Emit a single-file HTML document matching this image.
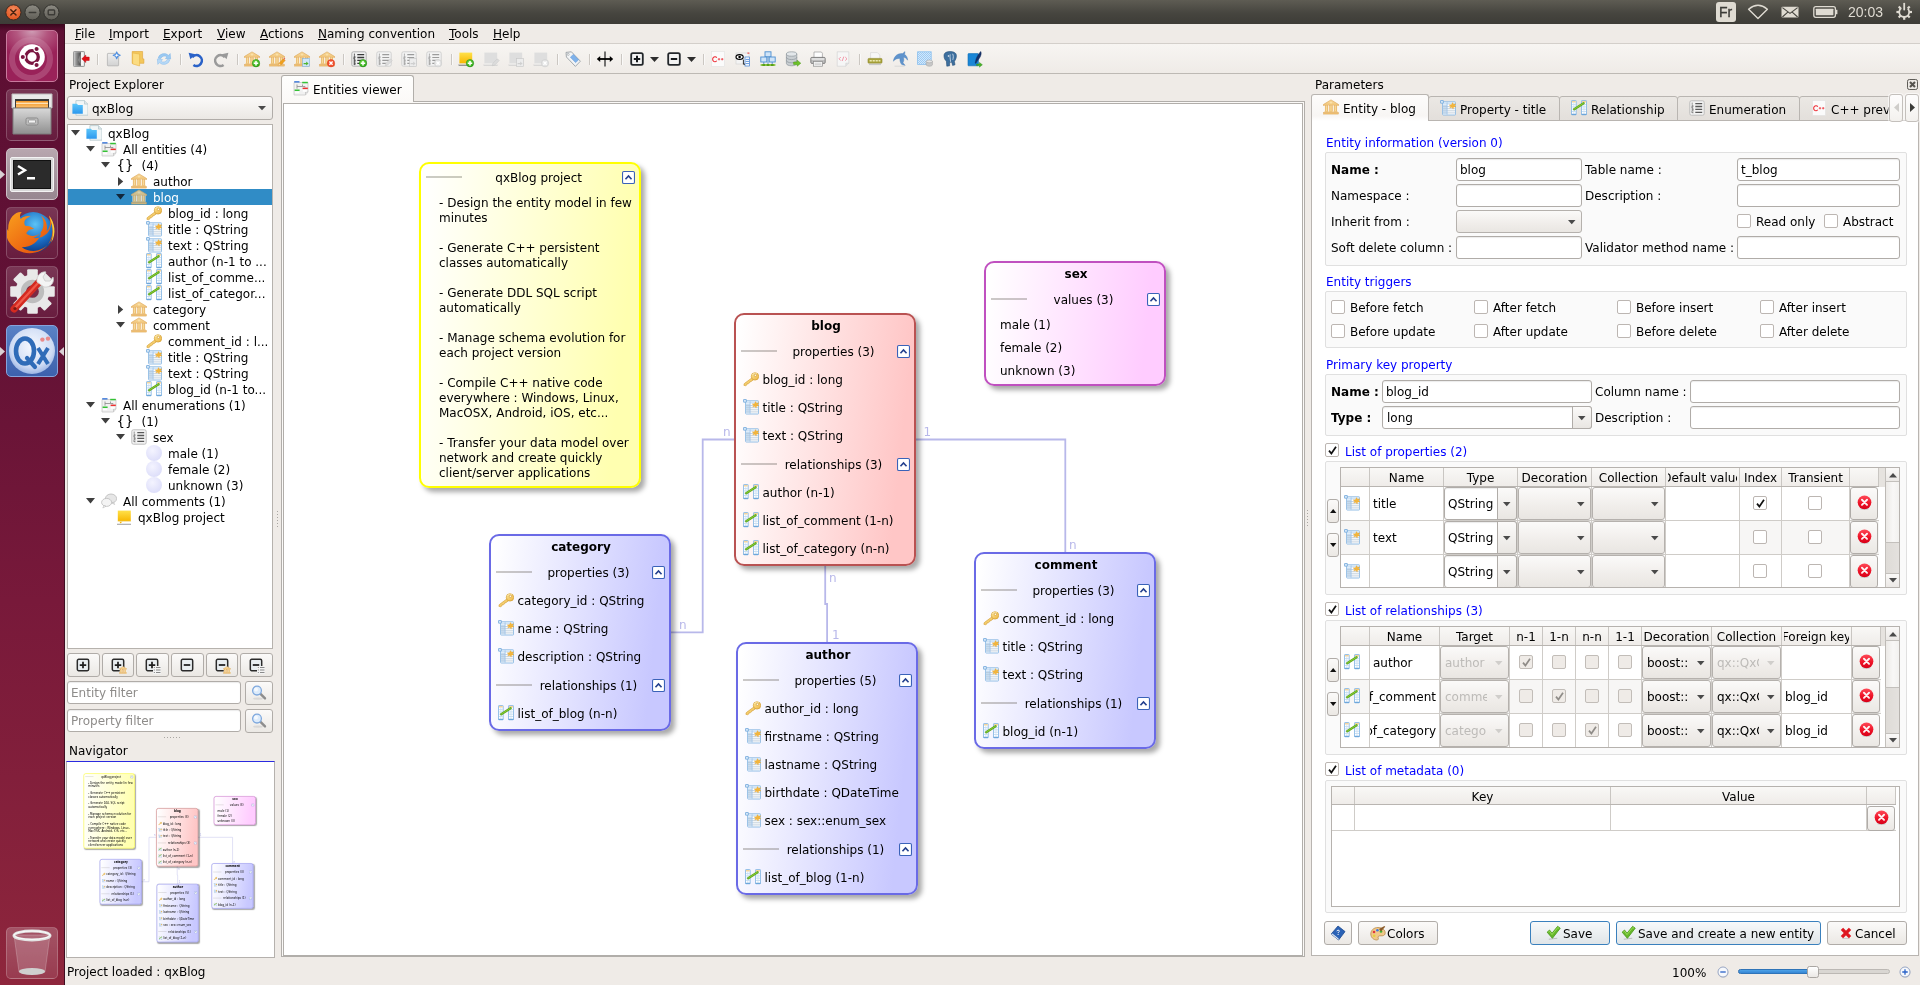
<!DOCTYPE html>
<html lang="en"><head><meta charset="utf-8"><title>QxEntityEditor</title>
<style>

*{box-sizing:border-box;margin:0;padding:0}
html,body{width:1920px;height:985px;overflow:hidden;background:#efebe7;font-family:"DejaVu Sans","Liberation Sans",sans-serif;font-size:12px;color:#000;line-height:14px}
#root{position:absolute;left:0;top:0;width:1920px;height:985px;overflow:hidden;will-change:transform}
.a{position:absolute}
.t{position:absolute;white-space:nowrap;line-height:14px;height:14px}
svg{position:absolute;overflow:visible}
#topbar{left:0;top:0;width:1920px;height:24px;background:linear-gradient(#5e5c53,#46453f 55%,#3d3c37)}
#launcher{left:0;top:24px;width:65px;height:961px;background:linear-gradient(#5d0f33 0%,#611135 30%,#78193a 60%,#8e263c 100%);border-right:1px solid #3f0d22}
.lt{position:absolute;left:6px;width:52px;height:52px;border-radius:5px;border:1px solid rgba(255,255,255,.20);background:linear-gradient(rgba(255,255,255,.16),rgba(255,255,255,.05));overflow:hidden}
#menubar{left:65px;top:24px;width:1855px;height:19px;background:#efebe7}
#toolbar{left:65px;top:43px;width:1855px;height:31px;background:linear-gradient(#f7f5f2,#efebe7);border-top:1px solid #d3cfca;border-bottom:1px solid #bdb9b4}
.sep{position:absolute;top:54px;width:2px;height:11px;background:linear-gradient(90deg,#cbc7c2 50%,#faf9f8 50%)}
.inp{position:absolute;background:#fff;border:1px solid #b0aca8;border-radius:3px;box-shadow:inset 0 1px 1px rgba(0,0,0,.08)}
.btn{position:absolute;border:1px solid #b0aca8;border-radius:3px;background:linear-gradient(#fbfaf9,#ebe8e4)}
.gb{position:absolute;border:1px solid #e0e0e0;border-radius:2px;background:#fafafa}
.cb{position:absolute;width:14px;height:14px;border:1px solid #bcb6b2;border-radius:2px;background:#fff}
.blue{color:#0000ff}
.hl{background:#308cc6}

</style></head>
<body><div id="root">

<svg width="0" height="0" style="position:absolute">
<defs>
<linearGradient id="gFold" x1="0" y1="0" x2="0" y2="1"><stop offset="0" stop-color="#5cc6fa"/><stop offset="1" stop-color="#2c98ee"/></linearGradient>
<linearGradient id="gBank" x1="0" y1="0" x2="0" y2="1"><stop offset="0" stop-color="#f9dca0"/><stop offset="1" stop-color="#f0c478"/></linearGradient>
<linearGradient id="gCol" x1="0" y1="0" x2="1" y2="0"><stop offset="0" stop-color="#ecbc6e"/><stop offset=".5" stop-color="#f9dc9a"/><stop offset="1" stop-color="#e9b666"/></linearGradient>
<linearGradient id="gKey" x1="0" y1="0" x2="1" y2="1"><stop offset="0" stop-color="#fbe595"/><stop offset="1" stop-color="#eeb545"/></linearGradient>
<linearGradient id="gNote" x1="0" y1="0" x2="0" y2="1"><stop offset="0" stop-color="#ffe14a"/><stop offset="1" stop-color="#f7b600"/></linearGradient>
<radialGradient id="gEval" cx=".4" cy=".35" r=".75"><stop offset="0" stop-color="#f4f4ff"/><stop offset="1" stop-color="#dadbf9"/></radialGradient>
<linearGradient id="gRed2" x1="0" y1="0" x2="0" y2="1"><stop offset="0" stop-color="#ff4a58"/><stop offset=".55" stop-color="#ee1428"/><stop offset="1" stop-color="#d80018"/></linearGradient>
<radialGradient id="gRed" cx=".4" cy=".35" r=".7"><stop offset="0" stop-color="#f5544c"/><stop offset="1" stop-color="#c4121a"/></radialGradient>
<radialGradient id="gGreen" cx=".4" cy=".35" r=".7"><stop offset="0" stop-color="#7be04a"/><stop offset="1" stop-color="#2aa516"/></radialGradient>

<symbol id="i-project" viewBox="0 0 16 16">
 <path d="M3.900 .6h8.600l3.500 3.500v11.100h-12.100z" fill="#f1f6f7" stroke="#b4c6cb" stroke-width=".8"/>
 <path d="M12.500 .6v3.500h3.500" fill="#dce7ea" stroke="#b4c6cb" stroke-width=".7"/>
 <path d="M.4 3.700h4.500l1.100 1.300h4.800v8.700h-10.400z" fill="url(#gFold)"/>
</symbol>

<symbol id="i-entities" viewBox="0 0 16 16">
 <path d="M1 2.5h14v9.5l-2.5 3h-11.5z" fill="#f1f1f1" stroke="#c9c9c9" stroke-width=".8"/>
 <path d="M12.5 15v-3h2.5" fill="#e1e1e1" stroke="#c2c2c2" stroke-width=".7"/>
 <rect x="1.2" y="1.2" width="5.3" height="1.3" fill="#2f6fd8"/>
 <rect x="9.2" y="1.8" width="5.6" height="1.5" fill="#35c135"/>
 <rect x="1.6" y="9.5" width="5" height="1.5" fill="#35c135"/>
 <rect x="9.6" y="7.6" width="5.2" height="1.5" fill="#ee3030"/>
 <path d="M4 4.5v4.2M4 6.5h5.5v-2M9.5 6.5h2.5v1" fill="none" stroke="#8c8c8c" stroke-width=".8"/>
 <rect x="2" y="11.6" width="4" height="1.6" fill="#fff" opacity=".9"/>
 <rect x="9.8" y="9.8" width="4" height="2" fill="#fff" opacity=".9"/>
</symbol>

<symbol id="i-entity" viewBox="0 0 16 16"><g transform="translate(0,-.8)">
 <path d="M8 1.700L15.700 6.400v.8H.3v-.8z" fill="url(#gBank)" stroke="#e0aa5c" stroke-width=".7" stroke-linejoin="round"/>
 <ellipse cx="8" cy="4.600" rx="1.300" ry=".8" fill="#fbe3b0"/>
 <rect x="1.500" y="7.200" width="13" height="6.300" fill="#fdf9f1"/>
 <g stroke="#e3ad5e" stroke-width=".5"><rect x="2.200" y="7.300" width="2.700" height="6.200" fill="url(#gCol)"/><rect x="6.650" y="7.300" width="2.700" height="6.200" fill="url(#gCol)"/><rect x="11.100" y="7.300" width="2.700" height="6.200" fill="url(#gCol)"/></g>
 <rect x="1.200" y="13.300" width="13.600" height="1" fill="#f0c375"/>
 <rect x=".5" y="14.200" width="15" height="1.700" fill="#efbf70" stroke="#dba457" stroke-width=".4"/>
</g></symbol>
<symbol id="i-key" viewBox="0 0 16 16">
 <path d="M9.600 6.400L1.300 12.600l-.4 1.700 1.800.4 1.500-1.200.1-1 1.200.1 1.300-1.100 .1-.9 1.100 0 3.200-2.400z" fill="url(#gKey)" stroke="#d6a23a" stroke-width=".7" stroke-linejoin="round"/>
 <circle cx="12" cy="5.400" r="3.700" fill="url(#gKey)" stroke="#d6a23a" stroke-width=".8"/>
 <path d="M9.200 4.200a3.200 3.200 0 0 1 4.600-1.600" fill="none" stroke="#fdf0c0" stroke-width=".9" opacity=".8"/>
 <circle cx="12.400" cy="4.300" r="1.150" fill="#fffaf0" stroke="#cf9a34" stroke-width=".6"/>
</symbol>

<symbol id="i-prop" viewBox="0 0 16 16">
 <rect x="2.600" y="1.800" width="13" height="13.200" rx=".7" fill="#fff" stroke="#86b6e2" stroke-width=".9"/>
 <rect x="3.050" y="2.250" width="12.100" height="2.300" fill="#cfe3f6"/>
 <rect x="3.050" y="4.550" width="4" height="10" fill="#d9e9f8"/>
 <path d="M3 6.600h12.200M3 8.700h12.200M3 10.800h12.200M3 12.900h12.200" stroke="#a7bccd" stroke-width=".7"/>
 <path d="M3 5.600h4M3 7.700h4M3 9.800h4M3 11.900h4M3 14h4" stroke="#bcd6ef" stroke-width=".8"/>
 <path d="M7.100 2.300v12.300" stroke="#9cc3e8" stroke-width=".8"/>
 <rect x=".5" y=".5" width="2.900" height="2.700" rx=".3" fill="#d6e8f9" stroke="#74a9dc" stroke-width=".8"/>
 <path d="M12.600 2.600l.9 1.700 2.400-.5-1.300 1.700 1.400 1.500-2.400 0-.5 2.100-1.200-1.800-2.200.8 1.100-1.900-1.700-1.300 2.300-.2z" fill="#f2b53c" stroke="#eaa324" stroke-width=".3"/>
</symbol>

<symbol id="i-rel" viewBox="0 0 16 16">
 <rect x=".5" y=".5" width="4.700" height="14.300" rx=".6" fill="#fff" stroke="#7db2e2" stroke-width=".8"/>
 <rect x="10.500" y=".5" width="5" height="14.300" rx=".6" fill="#fff" stroke="#7db2e2" stroke-width=".8"/>
 <rect x="1" y="1" width="3.700" height="1.500" fill="#f4d49c"/>
 <rect x="11" y="1" width="4" height="1.500" fill="#f4d49c"/>
 <path d="M1 4.600h3.700M1 6.900h3.700M1 9.200h3.700M1 11.500h3.700M11 4.600h4M11 6.900h4M11 9.200h4M11 11.500h4" stroke="#b4d2ee" stroke-width=".7"/>
 <path d="M2.800 2.500v12M13 2.500v12" stroke="#c6def3" stroke-width=".7"/>
 <path d="M.5 14.300h4.700M10.500 14.300h5" stroke="#5a9bd6" stroke-width="1"/>
 <path d="M3.200 9.200L12.600 3.200" fill="none" stroke="#5da51c" stroke-width="2.300" stroke-linecap="round"/>
 <path d="M3.400 9L12.400 3.300" fill="none" stroke="#8fd238" stroke-width=".9" stroke-linecap="round"/>
</symbol>

<symbol id="i-enum" viewBox="0 0 16 16">
 <rect x=".8" y=".8" width="14.4" height="14.4" rx="1.6" fill="#f3f3f3" stroke="#b9b9b9" stroke-width=".9"/>
 <path d="M6.3 3.6h6.9M6.3 6.5h6.9M6.3 9.4h6.9M6.3 12.3h6.9" stroke="#5a5a5a" stroke-width="1.3"/>
 <path d="M3.2 2.6v2.2M2.7 5.6h1.4v1h-1.4v1h1.4M2.7 8.6h1.4v2h-1.4M2.7 9.6h1.4M3.9 11.4v2M2.7 11.4v1h1.2" fill="none" stroke="#6a6a6a" stroke-width=".7"/>
</symbol>

<symbol id="i-eval" viewBox="0 0 16 16">
 <circle cx="8" cy="8" r="8" fill="url(#gEval)"/>
</symbol>

<symbol id="i-comments" viewBox="0 0 16 16">
 <ellipse cx="10" cy="5.6" rx="5.6" ry="4.6" fill="#e6e6e6" stroke="#b5b5b5" stroke-width=".7"/>
 <path d="M12.5 9l1.2 2.6-3-1.8z" fill="#e6e6e6" stroke="#b5b5b5" stroke-width=".5"/>
 <ellipse cx="5.6" cy="9.4" rx="5" ry="4" fill="#f4f4f4" stroke="#b5b5b5" stroke-width=".7"/>
 <path d="M3 12.4l-1.2 2.6 3.2-1.7z" fill="#f4f4f4" stroke="#b5b5b5" stroke-width=".5"/>
</symbol>

<symbol id="i-comment" viewBox="0 0 16 16">
 <path d="M1 15.300h14" stroke="#6b6b6b" stroke-width="1.100" opacity=".6"/>
 <rect x="1.800" y="1.600" width="13" height="10.800" fill="url(#gNote)"/>
 <path d="M3.600 12.400h3.200l-2.600 2z" fill="#f7b600"/>
 <path d="M1.800 12.400h13" stroke="#efe7c2" stroke-width=".6"/>
</symbol>

<symbol id="i-del" viewBox="0 0 16 16">
 <ellipse cx="8" cy="14.600" rx="4.600" ry="1.100" fill="#7a8a8a" opacity=".35"/>
 <circle cx="8" cy="7.800" r="7.300" fill="url(#gRed2)"/>
 <path d="M5.300 5.100l5.400 5.400M10.700 5.100l-5.400 5.400" stroke="#fff" stroke-width="2" stroke-linecap="round" opacity=".95"/>
</symbol>

<symbol id="i-collapse" viewBox="0 0 12 12">
 <rect x=".5" y=".5" width="11" height="11" rx="1.2" fill="#fff" stroke="#3a62b8" stroke-width="1"/>
 <path d="M3.2 7.6L6 4.6l2.8 3" fill="none" stroke="#24408e" stroke-width="1.5"/>
</symbol>

<symbol id="i-plus" viewBox="0 0 16 16">
 <rect x="1.5" y="1.5" width="13" height="13" rx="1.6" fill="#e9eef1" stroke="#2b2b2b" stroke-width="1.7"/>
 <path d="M8 4.3v7.4M4.3 8h7.4" stroke="#1e1e1e" stroke-width="2"/>
</symbol>
<symbol id="i-minus" viewBox="0 0 16 16">
 <rect x="1.5" y="1.5" width="13" height="13" rx="1.6" fill="#e9eef1" stroke="#2b2b2b" stroke-width="1.7"/>
 <path d="M4.3 8h7.4" stroke="#1e1e1e" stroke-width="2"/>
</symbol>
<symbol id="i-check" viewBox="0 0 16 16">
 <path d="M3 15.200l9-1" stroke="#8a8a8a" stroke-width="1.200" opacity=".45"/>
 <path d="M1.200 7.600L3.800 5.400 6.400 8.800 12.400 1.400 15.200 3.400 6.800 14.200z" fill="#66b82a" stroke="#4b9a1c" stroke-width=".9" stroke-linejoin="round"/>
 <path d="M2.600 7.500L3.700 6.600 6.400 10.200 12.600 2.700 13.800 3.500" fill="none" stroke="#a6e463" stroke-width="1" opacity=".85"/>
</symbol>
<symbol id="i-cross" viewBox="0 0 16 16">
 <path d="M3 15.400h10" stroke="#9a9a9a" stroke-width="1" opacity=".5"/><path d="M2.600 2.600l10.800 10.800M13.400 2.600L2.600 13.400" fill="none" stroke="#de1720" stroke-width="4.400" stroke-linecap="butt"/>
</symbol>
</defs>
</svg>

<div id="topbar" class="a">
<svg class="a" style="left:4px;top:3px" width="60" height="19" viewBox="0 0 60 19">
<defs><radialGradient id="gClose" cx=".5" cy=".3" r=".8"><stop offset="0" stop-color="#f58a5c"/><stop offset="1" stop-color="#dd4b14"/></radialGradient>
<linearGradient id="gWb" x1="0" y1="0" x2="0" y2="1"><stop offset="0" stop-color="#8d8b83"/><stop offset="1" stop-color="#5f5d56"/></linearGradient></defs>
<circle cx="9.4" cy="9.4" r="7.6" fill="url(#gClose)" stroke="#3b2a22" stroke-width="1"/>
<path d="M6.8 6.8l5.2 5.2M12 6.8l-5.2 5.2" stroke="#4a2310" stroke-width="1.5" stroke-linecap="round"/>
<circle cx="28.5" cy="9.4" r="7.6" fill="url(#gWb)" stroke="#33322e" stroke-width="1"/>
<path d="M25.3 9.6h6.4" stroke="#3c3b37" stroke-width="1.5" stroke-linecap="round"/>
<circle cx="47.4" cy="9.4" r="7.6" fill="url(#gWb)" stroke="#33322e" stroke-width="1"/>
<rect x="44.2" y="7" width="6.4" height="4.8" rx=".8" fill="none" stroke="#3c3b37" stroke-width="1.4"/>
</svg>
<div class="a" style="left:1716px;top:2px;width:20px;height:20px;border-radius:3px;background:#dfdbd2"></div>
<div class="t" style="left:1719px;top:4px;font-family:'Liberation Sans',sans-serif;font-size:14px;line-height:16px;height:16px;color:#3c3b37;-webkit-text-stroke:.35px #3c3b37">Fr</div>
<svg class="a" style="left:1746px;top:4px" width="170" height="18" viewBox="0 0 170 18">
<path d="M2.6 5.2Q12 -2.6 21.4 5.2L12 14.4z" fill="none" stroke="#dfdbd2" stroke-width="1.4" stroke-linejoin="round"/>
<rect x="35.5" y="2.8" width="17" height="10.8" rx="1" fill="#dfdbd2"/>
<path d="M36.4 3.6l7.6 5.8 7.6-5.8M36.4 13l5.4-4.8M51.6 13l-5.4-4.8" fill="none" stroke="#46453f" stroke-width="1.1"/>
<rect x="67.8" y="2.7" width="21.6" height="10.6" rx="2" fill="none" stroke="#dfdbd2" stroke-width="1.3"/>
<rect x="69.8" y="4.7" width="17.6" height="6.6" rx=".6" fill="#dfdbd2"/>
<path d="M90.6 5.8v4.4" stroke="#dfdbd2" stroke-width="1.6"/>
<g transform="translate(158.2,8)" fill="none" stroke="#dfdbd2">
<circle r="5" stroke-width="1.8" stroke-dasharray="23.6 7.8" stroke-dashoffset="-3.9" transform="rotate(-90)"/>
<g stroke-width="2.2"><path d="M0 -5v-2.8" transform="rotate(45)"/><path d="M0 -5v-2.8" transform="rotate(90)"/><path d="M0 -5v-2.8" transform="rotate(135)"/><path d="M0 -5v-2.8" transform="rotate(180)"/><path d="M0 -5v-2.8" transform="rotate(225)"/><path d="M0 -5v-2.8" transform="rotate(270)"/><path d="M0 -5v-2.8" transform="rotate(315)"/></g>
<path d="M0 -8.4v6" stroke-width="1.8" stroke-linecap="round"/>
</g>
</svg>
<div class="t" style="left:1848px;top:4px;font-family:'Liberation Sans',sans-serif;font-size:14px;line-height:16px;height:16px;color:#dfdbd2">20:03</div>
</div>
<div id="launcher" class="a">
<div class="lt" style="top:6px;background:radial-gradient(ellipse 70% 55% at 50% 0%,#cf9db5 0%,#b3567f 45%,#9a2259 100%);border-color:#c97a9d">
<svg style="left:0;top:0" width="50" height="50" viewBox="0 0 50 50">
<circle cx="24" cy="28" r="19" fill="none" stroke="#d9a0bb" stroke-width="6" opacity=".28"/>
<circle cx="25" cy="26" r="12.800" fill="#fff"/>
<circle cx="25" cy="26" r="6.300" fill="none" stroke="#7a1540" stroke-width="3.300"/>
<g fill="#7a1540" stroke="#fff" stroke-width="1.100"><circle cx="15.800" cy="26" r="2.600"/><circle cx="29.600" cy="18" r="2.600"/><circle cx="29.600" cy="34" r="2.600"/></g>
</svg></div>
<div class="lt" style="top:65px">
<svg style="left:0;top:0" width="50" height="50" viewBox="0 0 50 50">
<defs><linearGradient id="gCab" x1="0" y1="0" x2="0" y2="1"><stop offset="0" stop-color="#d9d9d9"/><stop offset="1" stop-color="#8f8f8f"/></linearGradient></defs>
<path d="M5 4h40v14H5z" fill="#e9e9e9" stroke="#bdbdbd"/>
<rect x="8" y="9" width="34" height="9" fill="#3a3a3a"/>
<rect x="9" y="11" width="32" height="8" fill="#f39a2e"/><rect x="9" y="12.6" width="32" height="1.6" fill="#fde2b6"/><rect x="9" y="15.5" width="32" height="1.2" fill="#fbc77c"/>
<path d="M6 18h38v26H6z" fill="url(#gCab)" stroke="#7d7d7d"/>
<rect x="19" y="28" width="12" height="7" rx="1.5" fill="#bdbdbd" stroke="#8a8a8a"/>
<rect x="21.5" y="30" width="7" height="3" rx=".8" fill="#f3f3f3" stroke="#777" stroke-width=".6"/>
</svg></div>
<div class="lt" style="top:124px;background:linear-gradient(#b8a7af,#978790);border-color:#cdbfc6">
<svg style="left:0;top:0" width="50" height="50" viewBox="0 0 50 50">
<rect x="3.5" y="8.5" width="43" height="34" rx="1.5" fill="#d8d8d8" stroke="#f4f4f4"/>
<rect x="6.5" y="11.5" width="37" height="28" fill="#2b2b2b" stroke="#111"/>
<path d="M11 17l7 4.3-7 4.3" fill="none" stroke="#fff" stroke-width="2.4"/>
<path d="M20 29.3h8" stroke="#fff" stroke-width="2.4"/>
</svg></div>
<div class="lt" style="top:183px">
<svg style="left:0;top:0" width="50" height="50" viewBox="0 0 50 50">
<defs><radialGradient id="gFxB" cx=".55" cy=".3" r=".7"><stop offset="0" stop-color="#5cc3f5"/><stop offset=".6" stop-color="#1b6dc4"/><stop offset="1" stop-color="#0c3a86"/></radialGradient>
<linearGradient id="gFxO" x1="0" y1="0" x2="1" y2="1"><stop offset="0" stop-color="#f9a01e"/><stop offset=".6" stop-color="#ee6a12"/><stop offset="1" stop-color="#d9440c"/></linearGradient></defs>
<g transform="translate(25 25) scale(1.13) translate(-26 -23.5)"><circle cx="27" cy="23" r="18" fill="url(#gFxB)"/>
<path d="M5 22C4 10 12 4 17 5c-2 2-2 4-1 6 3-3 7-3 9-2-5 1-7 5-5 8 3 0 6 1 8 3-3 0-6 1-7 4 3 3 9 3 13-1-1 8-9 13-17 13 8 6 20 4 26-6 4-8 2-17-2-22 2 6 1 11-2 14 1-6-1-11-5-14 5 8 1 17-7 20 10 1 16-6 16-14 3 9 0 20-9 25-10 5-22 2-28-7-3-4-3-9-2-12z" fill="url(#gFxO)"/>
<path d="M41 8c5 6 7 16 2 24 3-9 1-17-2-24z" fill="#fbd23a"/></g>
</svg></div>
<div class="lt" style="top:242px">
<svg style="left:0;top:0" width="50" height="50" viewBox="0 0 50 50">
<g transform="translate(25.500,24.500) scale(1.06)">
<g fill="#e9e9e9"><rect x="-5" y="-21" width="10" height="42" rx="1"/><rect x="-5" y="-21" width="10" height="42" rx="1" transform="rotate(45)"/><rect x="-5" y="-21" width="10" height="42" rx="1" transform="rotate(90)"/><rect x="-5" y="-21" width="10" height="42" rx="1" transform="rotate(135)"/></g>
<circle r="16" fill="#e9e9e9"/><circle r="11" fill="#bdbdbd"/><circle r="6" fill="#7b2a44"/>
</g>
<path d="M7 42L33 14" stroke="#d32a20" stroke-width="7" stroke-linecap="round"/>
<path d="M8 41L32 15" stroke="#f05a4a" stroke-width="2.2" stroke-linecap="round"/>
<circle cx="8" cy="41.5" r="1.6" fill="#7a1a14"/>
<path d="M30 15c-1-6 4-11 9-10l-3 5 2 4 5 0 3-4c2 6-3 11-9 10z" fill="#f4f4f4" stroke="#c9c9c9" stroke-width=".8"/>
</svg></div>
<div class="lt" style="top:301px;background:linear-gradient(#5a82c6,#3d61ad);border-color:#86a3dc">
<svg style="left:0;top:0" width="50" height="50" viewBox="0 0 50 50">
<defs><radialGradient id="gQx" cx=".5" cy=".4" r=".6"><stop offset="0" stop-color="#f6f9ff"/><stop offset=".75" stop-color="#cfdcf4"/><stop offset="1" stop-color="#9db6e4"/></radialGradient></defs>
<circle cx="25" cy="25" r="23" fill="url(#gQx)"/>
<ellipse cx="18" cy="25" rx="9" ry="12.5" fill="none" stroke="#2f6cb8" stroke-width="4.6"/>
<path d="M20 32l8 9" stroke="#2f6cb8" stroke-width="4.2" stroke-linecap="round"/>
<path d="M31 22l10 16M41 22L31 38" stroke="#2f6cb8" stroke-width="4" stroke-linecap="butt"/>
<circle cx="35.4" cy="13.6" r="2.2" fill="#e98a8a"/><circle cx="41" cy="12.6" r="2.2" fill="#e98a8a"/>
</svg></div>
<svg style="left:0;top:146px" width="6" height="9"><path d="M0 0l5 4.5L0 9z" fill="#d9d0d4"/></svg>
<svg style="left:0;top:323px" width="6" height="9"><path d="M0 0l5 4.5L0 9z" fill="#d9d0d4"/></svg>
<svg style="left:59px;top:323px" width="6" height="9"><path d="M5 0L0 4.5 5 9z" fill="#d9d0d4"/></svg>
<div class="lt" style="top:903px;background:linear-gradient(rgba(255,255,255,.22),rgba(255,255,255,.10))">
<svg style="left:0;top:0" width="50" height="50" viewBox="0 0 50 50">
<path d="M7 7l5 37q13 4 26 0l5-37z" fill="rgba(255,255,255,.16)" stroke="rgba(255,255,255,.28)" stroke-width=".8"/>
<ellipse cx="25" cy="43.5" rx="13" ry="3.4" fill="#cfcfcf"/>
<ellipse cx="25" cy="7.5" rx="18" ry="4.4" fill="none" stroke="#e2e2e2" stroke-width="3"/>
<ellipse cx="25" cy="7.2" rx="18" ry="4.2" fill="none" stroke="#fafafa" stroke-width="1"/>
</svg></div>
<div class="a" style="left:0;top:0;width:64px;height:7px;background:linear-gradient(rgba(30,0,12,.55),rgba(30,0,12,0))"></div>
</div>
<div id="menubar" class="a"></div>
<div class="t" style="left:75px;top:27px"><u>F</u>ile</div>
<div class="t" style="left:109px;top:27px"><u>I</u>mport</div>
<div class="t" style="left:163px;top:27px"><u>E</u>xport</div>
<div class="t" style="left:217px;top:27px"><u>V</u>iew</div>
<div class="t" style="left:260px;top:27px"><u>A</u>ctions</div>
<div class="t" style="left:318px;top:27px"><u>N</u>aming convention</div>
<div class="t" style="left:449px;top:27px"><u>T</u>ools</div>
<div class="t" style="left:493px;top:27px"><u>H</u>elp</div>
<div id="toolbar" class="a"></div>
<svg class="a" style="left:73px;top:51px" width="16" height="16" viewBox="0 0 16 16"><defs><linearGradient id="gDoor" x1="0" y1="0" x2="1" y2="0"><stop offset="0" stop-color="#bdbdbd"/><stop offset=".35" stop-color="#8a8a8a"/><stop offset="1" stop-color="#454545"/></linearGradient></defs>
<rect x=".5" y=".5" width="11" height="15" rx=".8" fill="#c9c9c9" stroke="#8c8c8c" stroke-width=".8"/>
<rect x="1.400" y="1.300" width="6.600" height="13.400" fill="url(#gDoor)"/>
<path d="M8 1.300h2.700v13.400H8z" fill="#f6f6f6"/><path d="M8 1.300L5.200 9 8 14.700z" fill="#fff" opacity=".25"/>
<path d="M8.800 7.800l4-3.700v2h3.400v3.400h-3.400v2z" fill="#e01018" stroke="#c40d14" stroke-width=".5" stroke-linejoin="round"/></svg>
<svg class="a" style="left:106px;top:51px" width="16" height="16" viewBox="0 0 16 16"><defs><linearGradient id="gPg" x1="0" y1="0" x2="0" y2="1"><stop offset="0" stop-color="#efefef"/><stop offset="1" stop-color="#d2d2d2"/></linearGradient></defs>
<rect x="1.400" y="2.400" width="11.200" height="12.400" rx=".6" fill="url(#gPg)" stroke="#b3b3b3" stroke-width=".8"/>
<path d="M10.700 .9l1 2.400 2.500 1-2.500 1-1 2.400-1-2.400-2.500-1 2.500-1z" fill="#fff" stroke="#4f8fe0" stroke-width="1.100" stroke-linejoin="round"/></svg>
<svg class="a" style="left:131px;top:51px" width="16" height="16" viewBox="0 0 16 16"><path d="M1.200 .5h10.400v7.400h1.300v4.400H1.200z" fill="#f3c75c" stroke="#dfa234" stroke-width=".6" stroke-linejoin="round"/><path d="M1.600 1.900L8.600 3.100V15L1.600 12.900z" fill="#fbdc82" stroke="#e6b044" stroke-width=".6" stroke-linejoin="round"/></svg>
<svg class="a" style="left:156px;top:51px" width="16" height="16" viewBox="0 0 16 16"><path d="M2.2 7.2A6 5.4 0 0 1 12.6 4.4L14.2 2.6 14.6 8 9.4 7.4l1.6-1.6A3.8 3.4 0 0 0 4.8 7.6z" fill="#9ccaf2" stroke="#7ab2e6" stroke-width=".5"/>
<path d="M13.8 8.8A6 5.4 0 0 1 3.4 11.6L1.8 13.4 1.4 8 6.6 8.6 5 10.2a3.8 3.4 0 0 0 6.2-1.8z" fill="#b7d9f7" stroke="#86bbea" stroke-width=".5"/></svg>
<svg class="a" style="left:188px;top:51px" width="16" height="16" viewBox="0 0 16 16"><path d="M4.2 6.2A5.4 5.4 0 1 1 5.4 14" fill="none" stroke="#2a62c8" stroke-width="2.6"/><path d="M.6 1.8l6.8 1.4-5 5z" fill="#2a62c8"/></svg>
<svg class="a" style="left:213px;top:51px" width="16" height="16" viewBox="0 0 16 16"><path d="M11.8 6.2A5.4 5.4 0 1 0 10.6 14" fill="none" stroke="#9a9a9a" stroke-width="2.6"/><path d="M15.4 1.8L8.6 3.2l5 5z" fill="#9a9a9a"/></svg>
<svg class="a" style="left:244px;top:51px" width="16" height="16" viewBox="0 0 16 16"><use href="#i-entity"/><circle cx="12" cy="12.2" r="3.7" fill="url(#gGreen)" stroke="#1f8a10" stroke-width=".5"/><path d="M12 10v4.4M9.8 12.2h4.4" stroke="#fff" stroke-width="1.5"/></svg>
<svg class="a" style="left:269px;top:51px" width="16" height="16" viewBox="0 0 16 16"><use href="#i-entity"/><path d="M9.2 14.8l.8-2.6 4.4-4.4 1.8 1.8-4.4 4.4z" fill="#f0a11c" stroke="#c9791a" stroke-width=".4"/><path d="M14.4 7.8l1 -1 .9.9-1 1z" fill="#e5604c"/><path d="M9.2 14.8l.8-2.6 1.8 1.8z" fill="#f7deb0"/></svg>
<svg class="a" style="left:294px;top:51px" width="16" height="16" viewBox="0 0 16 16"><use href="#i-entity"/><rect x="8.6" y="7.6" width="6.8" height="7.8" fill="#cfe6f8" stroke="#7fb2dc" stroke-width=".6"/><path d="M9.6 12h2.6v-1.4l2.4 2-2.4 2v-1.4H9.6z" fill="#52b530"/></svg>
<svg class="a" style="left:319px;top:51px" width="16" height="16" viewBox="0 0 16 16"><use href="#i-entity"/><circle cx="12" cy="12.2" r="3.7" fill="#f2502e" stroke="#d63a1c" stroke-width=".5"/><path d="M10.4 10.6l3.2 3.2M13.6 10.6l-3.2 3.2" stroke="#fff" stroke-width="1.4"/></svg>
<svg class="a" style="left:351px;top:51px" width="16" height="16" viewBox="0 0 16 16"><rect x=".8" y=".8" width="14.4" height="14.4" rx="1.6" fill="#f1f1f1" stroke="#a9a9a9" stroke-width=".9"/>
<path d="M6.3 3.6h6.9M6.3 6.5h6.9M6.3 9.4h6.9M6.3 12.3h4" stroke="#3a3a3a" stroke-width="1.3"/>
<path d="M3.4 2.6v2.2M2.7 5.6h1.4v1h-1.4v1h1.4M2.7 8.6h1.4v2h-1.4M2.7 9.6h1.4M2.7 11.6h1.4v2h-1.4M2.7 12.6h1.4" fill="none" stroke="#3a3a3a" stroke-width=".8"/><circle cx="12" cy="12.2" r="3.7" fill="url(#gGreen)" stroke="#1f8a10" stroke-width=".5"/><path d="M12 10v4.4M9.8 12.2h4.4" stroke="#fff" stroke-width="1.5"/></svg>
<svg class="a" style="left:376px;top:51px" width="16" height="16" viewBox="0 0 16 16"><rect x=".8" y=".8" width="14.4" height="14.4" rx="1.6" fill="#f3f3f3" stroke="#cdcdcd" stroke-width=".9"/>
<path d="M6.3 3.6h6.9M6.3 6.5h6.9M6.3 9.4h6.9M6.3 12.3h4" stroke="#9b9b9b" stroke-width="1.2"/>
<path d="M3.4 2.6v2.2M2.7 5.6h1.4v1h-1.4v1h1.4M2.7 8.6h1.4v2h-1.4M2.7 9.6h1.4M2.7 11.6h1.4v2h-1.4M2.7 12.6h1.4" fill="none" stroke="#9b9b9b" stroke-width=".8"/><path d="M9.2 14.8l.8-2.6 4.4-4.4 1.8 1.8-4.4 4.4z" fill="#dcdcdc" stroke="#bdbdbd" stroke-width=".4"/></svg>
<svg class="a" style="left:401px;top:51px" width="16" height="16" viewBox="0 0 16 16"><rect x=".8" y=".8" width="14.4" height="14.4" rx="1.6" fill="#f3f3f3" stroke="#cdcdcd" stroke-width=".9"/>
<path d="M6.3 3.6h6.9M6.3 6.5h6.9M6.3 9.4h6.9M6.3 12.3h4" stroke="#9b9b9b" stroke-width="1.2"/>
<path d="M3.4 2.6v2.2M2.7 5.6h1.4v1h-1.4v1h1.4M2.7 8.6h1.4v2h-1.4M2.7 9.6h1.4M2.7 11.6h1.4v2h-1.4M2.7 12.6h1.4" fill="none" stroke="#9b9b9b" stroke-width=".8"/><rect x="8.6" y="7.6" width="6.8" height="7.8" fill="#ececec" stroke="#c6c6c6" stroke-width=".6"/><path d="M9.6 12h2.6v-1.4l2.4 2-2.4 2v-1.4H9.6z" fill="#cfcfcf"/></svg>
<svg class="a" style="left:426px;top:51px" width="16" height="16" viewBox="0 0 16 16"><rect x=".8" y=".8" width="14.4" height="14.4" rx="1.6" fill="#f3f3f3" stroke="#cdcdcd" stroke-width=".9"/>
<path d="M6.3 3.6h6.9M6.3 6.5h6.9M6.3 9.4h6.9M6.3 12.3h4" stroke="#9b9b9b" stroke-width="1.2"/>
<path d="M3.4 2.6v2.2M2.7 5.6h1.4v1h-1.4v1h1.4M2.7 8.6h1.4v2h-1.4M2.7 9.6h1.4M2.7 11.6h1.4v2h-1.4M2.7 12.6h1.4" fill="none" stroke="#9b9b9b" stroke-width=".8"/><circle cx="12" cy="12.2" r="3.7" fill="#e3e3e3" stroke="#c9c9c9" stroke-width=".5"/><path d="M10.4 10.6l3.2 3.2M13.6 10.6l-3.2 3.2" stroke="#fff" stroke-width="1.4"/></svg>
<svg class="a" style="left:458px;top:51px" width="16" height="16" viewBox="0 0 16 16"><path d="M.8 15h13.6l.6-1.4H.2z" fill="#5a5a5a" opacity=".6"/><rect x="1.4" y="1.6" width="12.8" height="10.8" fill="url(#gNote)"/><path d="M1.4 12.4L1 13.6h13.6l-.4-1.2z" fill="#ddd6b6"/><circle cx="12" cy="12.2" r="3.7" fill="url(#gGreen)" stroke="#1f8a10" stroke-width=".5"/><path d="M12 10v4.4M9.8 12.2h4.4" stroke="#fff" stroke-width="1.5"/></svg>
<svg class="a" style="left:483px;top:51px" width="16" height="16" viewBox="0 0 16 16"><path d="M.8 15h13.6l.6-1.4H.2z" fill="#c8c8c8" opacity=".6"/><rect x="1.4" y="1.6" width="12.8" height="10.8" fill="#dedede"/><path d="M1.4 12.4L1 13.6h13.6l-.4-1.2z" fill="#ececec"/><path d="M9.2 14.8l.8-2.6 4.4-4.4 1.8 1.8-4.4 4.4z" fill="#dcdcdc" stroke="#bdbdbd" stroke-width=".4"/></svg>
<svg class="a" style="left:508px;top:51px" width="16" height="16" viewBox="0 0 16 16"><path d="M.8 15h13.6l.6-1.4H.2z" fill="#c8c8c8" opacity=".6"/><rect x="1.4" y="1.6" width="12.8" height="10.8" fill="#dedede"/><path d="M1.4 12.4L1 13.6h13.6l-.4-1.2z" fill="#ececec"/><rect x="8.6" y="7.6" width="6.8" height="7.8" fill="#ececec" stroke="#c6c6c6" stroke-width=".6"/><path d="M9.6 12h2.6v-1.4l2.4 2-2.4 2v-1.4H9.6z" fill="#cfcfcf"/></svg>
<svg class="a" style="left:533px;top:51px" width="16" height="16" viewBox="0 0 16 16"><path d="M.8 15h13.6l.6-1.4H.2z" fill="#c8c8c8" opacity=".6"/><rect x="1.4" y="1.6" width="12.8" height="10.8" fill="#dedede"/><path d="M1.4 12.4L1 13.6h13.6l-.4-1.2z" fill="#ececec"/><circle cx="12" cy="12.2" r="3.7" fill="#e3e3e3" stroke="#c9c9c9" stroke-width=".5"/><path d="M10.4 10.6l3.2 3.2M13.6 10.6l-3.2 3.2" stroke="#fff" stroke-width="1.4"/></svg>
<svg class="a" style="left:564.5px;top:51px" width="16" height="16" viewBox="0 0 16 16"><path d="M1 1.4l5.4-.6 9 9.4-5 5.2-9-9.4z" fill="#f2f4f6" stroke="#8f959b" stroke-width=".8" stroke-linejoin="round"/><path d="M5.4 6.2l3-2.8 5.2 5.4-3 2.8z" fill="#7fb2ea" stroke="#5b94d6" stroke-width=".5"/><circle cx="3.2" cy="3.4" r="1" fill="#fff" stroke="#8f959b" stroke-width=".6"/></svg>
<svg class="a" style="left:597px;top:51px" width="16" height="16" viewBox="0 0 16 16"><path d="M8 .4v15.2" stroke="#3c3c3c" stroke-width="1.4"/><path d="M1.6 8h12.8" stroke="#000" stroke-width="1.8"/><path d="M-.2 8l3.4-3v6zM16.2 8l-3.4-3v6z" fill="#000"/></svg>
<svg class="a" style="left:628.5px;top:51px" width="16" height="16" viewBox="0 0 16 16"><rect x="2.200" y="2.200" width="11.600" height="11.600" rx="1.600" fill="#f3f3f3" stroke="#23272b" stroke-width="1.800"/><path d="M8 4.800v6.400M4.800 8h6.400" stroke="#16191c" stroke-width="2"/></svg>
<svg class="a" style="left:665.5px;top:51px" width="16" height="16" viewBox="0 0 16 16"><rect x="2.200" y="2.200" width="11.600" height="11.600" rx="1.600" fill="#f3f3f3" stroke="#23272b" stroke-width="1.800"/><path d="M4.800 8h6.400" stroke="#16191c" stroke-width="2"/></svg>
<svg class="a" style="left:710px;top:51px" width="16" height="16" viewBox="0 0 16 16"><rect x="1.6" y=".6" width="12.8" height="14.8" fill="#fbfbfb" stroke="#e3e3e3" stroke-width=".6"/><path d="M6.800 6.700A2.300 2.500 0 1 0 6.800 9.700" fill="none" stroke="#ee2c34" stroke-width="1.050"/><path d="M7.800 8.200h2.400M9 7v2.400M11 8.200h2.400M12.200 7v2.400" stroke="#ee2c34" stroke-width=".75"/></svg>
<svg class="a" style="left:735px;top:51px" width="16" height="16" viewBox="0 0 16 16"><rect x="1" y="2" width="13" height="11" fill="#f4f4f4" stroke="#d0d0d0" stroke-width=".6"/><ellipse cx="4.6" cy="6" rx="3.6" ry="2.4" fill="#fff" stroke="#000" stroke-width="1.2"/><circle cx="4.6" cy="6" r="1.3" fill="#000"/>
<rect x="10" y="6" width="4.6" height="9" fill="#fff" stroke="#3b7bd0" stroke-width=".7"/><path d="M10.6 8.4h3.4M10.6 10.4h3.4M10.6 12.6h3.4" stroke="#3b7bd0" stroke-width=".8"/><path d="M8.4 8.6v4.6h1.6" fill="none" stroke="#000" stroke-width=".8"/><rect x="12.4" y="1.6" width="2" height="1" fill="#e33"/></svg>
<svg class="a" style="left:759.5px;top:51px" width="16" height="16" viewBox="0 0 16 16"><rect x="5" y=".8" width="6" height="5" fill="#cfe4f8" stroke="#4d8fd0" stroke-width=".9"/><rect x=".8" y="6" width="6" height="5" fill="#cfe4f8" stroke="#4d8fd0" stroke-width=".9"/><rect x="9.2" y="6" width="6" height="5" fill="#cfe4f8" stroke="#4d8fd0" stroke-width=".9"/>
<path d="M3.8 11v2.6M12.2 11v2.6M8 5.8v7.8" stroke="#4d8fd0" stroke-width=".9"/><path d="M.6 14h14.8" stroke="#7cc02c" stroke-width="1.6"/><path d="M2.4 14h2.8M6.6 14h2.8M10.8 14h2.8" stroke="#5aa018" stroke-width="2.2"/></svg>
<svg class="a" style="left:784.5px;top:51px" width="16" height="16" viewBox="0 0 16 16"><path d="M1.4 3v9.4c0 1.4 2.4 2.4 5.2 2.4s5.2-1 5.2-2.4V3z" fill="#c9ced2" stroke="#8e969c" stroke-width=".7"/><ellipse cx="6.6" cy="3" rx="5.2" ry="2.2" fill="#e3e7ea" stroke="#8e969c" stroke-width=".7"/><path d="M1.4 6.2c0 1.4 2.4 2.4 5.2 2.4s5.2-1 5.2-2.4M1.4 9.4c0 1.4 2.4 2.4 5.2 2.4s5.2-1 5.2-2.4" fill="none" stroke="#8e969c" stroke-width=".7"/>
<path d="M8.6 11h3.6V9.2l3.6 3-3.6 3v-1.8H8.6z" fill="#6fc22a" stroke="#4b9a14" stroke-width=".5"/></svg>
<svg class="a" style="left:810px;top:51px" width="16" height="16" viewBox="0 0 16 16"><path d="M4 1h7.4l1 1.2V7H4z" fill="#fdfdfd" stroke="#9b9b9b" stroke-width=".7"/><rect x=".8" y="6.4" width="14.4" height="6" rx="1" fill="#bdbdbd" stroke="#6e6e6e" stroke-width=".8"/><rect x="1.6" y="7.2" width="12.8" height="1.6" fill="#e6e6e6"/><rect x="3.4" y="10.6" width="9.2" height="4.6" fill="#fafafa" stroke="#8a8a8a" stroke-width=".7"/><path d="M4.6 12.2h6.8M4.6 13.6h6.8" stroke="#b5b5b5" stroke-width=".6"/></svg>
<svg class="a" style="left:835px;top:51px" width="16" height="16" viewBox="0 0 16 16"><path d="M2.2.8h11.6v11.4l-3 3H2.2z" fill="#f6f6f6" stroke="#d4d4d4" stroke-width=".7"/><path d="M13.8 12.2h-3v3" fill="#e4e4e4" stroke="#cfcfcf" stroke-width=".6"/><path d="M5.8 6L4 7.8l1.8 1.8M10.2 6L12 7.8l-1.8 1.8M8.8 5.6L7.2 10" fill="none" stroke="#f08fa0" stroke-width=".9"/></svg>
<svg class="a" style="left:867px;top:51px" width="16" height="16" viewBox="0 0 16 16"><path d="M3.6 1.6h6.8l2.4 2.4v5H3.6z" fill="#f7f7f7" stroke="#d2d2d2" stroke-width=".6"/><rect x="1" y="7.4" width="14" height="4.8" rx="1" fill="#a8a23a" stroke="#8c8628" stroke-width=".6"/><path d="M2.6 9.8h10.8" stroke="#eae8b0" stroke-width="1.6" stroke-dasharray="2.2 .8"/><path d="M2 13.4h12" stroke="#c9c9c9" stroke-width="1.4"/></svg>
<svg class="a" style="left:891.5px;top:51px" width="16" height="16" viewBox="0 0 16 16"><path d="M1.4 10.2C2 5 6 2 10.6 2.6L13 .6l-.4 2.8c2 1.2 3 3.4 3 5.8-1.2-2-2.6-2.8-4.2-3 .8 2 .4 4-.4 5.6l2.2 2.6-3.4-.8C8.4 12 7.6 9.6 8 7.600 5.400 7 3 8.200 1.400 10.200z" fill="#5f93cc" stroke="#4a7db8" stroke-width=".4"/><path d="M2.6 15.200h10" stroke="#d4d4d4" stroke-width=".8"/></svg>
<svg class="a" style="left:916.5px;top:51px" width="16" height="16" viewBox="0 0 16 16"><defs><pattern id="pChk" width="2" height="2" patternUnits="userSpaceOnUse"><rect width="2" height="2" fill="#d3e8fb"/><rect width="1" height="1" fill="#9ccaf3"/><rect x="1" y="1" width="1" height="1" fill="#9ccaf3"/></pattern></defs>
<rect x=".6" y=".8" width="13.6" height="12.6" fill="url(#pChk)" stroke="#8cc0ee" stroke-width=".8"/><path d="M9.200 10.400v3.400c0 .8 1.400 1.400 3.100 1.400s3.100-.6 3.100-1.400v-3.400z" fill="#c8c8c8" stroke="#9a9a9a" stroke-width=".5"/><ellipse cx="12.3" cy="10.4" rx="3.100" ry="1.400" fill="#e4e4e4" stroke="#9a9a9a" stroke-width=".5"/></svg>
<svg class="a" style="left:942px;top:51px" width="16" height="16" viewBox="0 0 16 16"><path d="M2 4.600C2 1.800 4.600.6 8 .6s6.400 1 6.400 4.200c0 2.400-1 4.200-2 5.600l.6 3.400-2.400.6-.8-3.200H7.600v3.600l-2.800.4-.4-5C2.800 9 2 7 2 4.600z" fill="#3d6f9e" stroke="#274f78" stroke-width=".6"/><path d="M8.200 3.400c-.6 2 .2 5 .4 7.400M10.600 2.800c1 1.600.8 4 .2 6" fill="none" stroke="#dfe9f2" stroke-width=".8"/><circle cx="6.400" cy="5" r=".7" fill="#fff"/></svg>
<svg class="a" style="left:967px;top:51px" width="16" height="16" viewBox="0 0 16 16"><rect x="1" y="2.600" width="10.400" height="12.200" rx=".6" fill="#1a86d6" stroke="#0f6cb4" stroke-width=".6"/><path d="M13.800.4c1 1.600.2 4.600-1.600 7.200-1.200 1.600-2.400 2.600-3.200 4.800L8.200 12c.4-3 1.200-5.400 2.600-7.600C11.800 2.800 12.800 1.200 13.800.4z" fill="#16326a" stroke="#0d2250" stroke-width=".4"/><path d="M9.600 13h2.800v-1.600l3 2.400-3 2.400v-1.600H9.600z" fill="#47b02a" stroke="#2e8c16" stroke-width=".4"/></svg>
<div class="sep" style="left:97px"></div>
<div class="sep" style="left:180px"></div>
<div class="sep" style="left:237px"></div>
<div class="sep" style="left:343px"></div>
<div class="sep" style="left:451px"></div>
<div class="sep" style="left:557px"></div>
<div class="sep" style="left:589px"></div>
<div class="sep" style="left:621px"></div>
<div class="sep" style="left:703px"></div>
<div class="sep" style="left:859px"></div>
<svg class="a" style="left:650.0px;top:57px" width="9" height="5"><path d="M0 0h9L4.5 5z" fill="#2e2e2e"/></svg>
<svg class="a" style="left:687.0px;top:57px" width="9" height="5"><path d="M0 0h9L4.5 5z" fill="#2e2e2e"/></svg>
<div class="t" style="left:69px;top:78px">Project Explorer</div>
<div class="btn" style="left:67px;top:96px;width:206px;height:24px;border-radius:3px"></div>
<svg class="a" style="left:72px;top:100px" width="16" height="16" ><use href="#i-project"/></svg>
<div class="t" style="left:92px;top:102px">qxBlog</div>
<svg class="a" style="left:258px;top:106px" width="8" height="5"><path d="M0 0h8L4 4.200z" fill="#4a4a4a"/></svg>
<div class="a" style="left:67px;top:124px;width:206px;height:525px;background:#fff;border:1px solid #b6b2ad"></div>
<svg class="a" style="left:71.0px;top:130px" width="9" height="6"><path d="M0 0h9L4.5 5.4z" fill="#3f3f3f"/></svg>
<svg class="a" style="left:86px;top:125px" width="16" height="16" ><use href="#i-project"/></svg>
<div class="t" style="left:108px;top:127px">qxBlog</div>
<svg class="a" style="left:86.0px;top:146px" width="9" height="6"><path d="M0 0h9L4.5 5.4z" fill="#3f3f3f"/></svg>
<svg class="a" style="left:101px;top:141px" width="16" height="16" ><use href="#i-entities"/></svg>
<div class="t" style="left:123px;top:143px">All entities (4)</div>
<svg class="a" style="left:101.0px;top:162px" width="9" height="6"><path d="M0 0h9L4.5 5.4z" fill="#3f3f3f"/></svg>
<div class="t" style="left:116.5px;top:158px;font-size:13.3px;line-height:15px;height:15px">{}</div>
<div class="t" style="left:141.5px;top:159px">(4)</div>
<svg class="a" style="left:117.9px;top:176.5px" width="6" height="9"><path d="M0 0v9L5.2 4.5z" fill="#3f3f3f"/></svg>
<svg class="a" style="left:131px;top:173px" width="16" height="16" ><use href="#i-entity"/></svg>
<div class="t" style="left:153px;top:175px">author</div>
<div class="a hl" style="left:68px;top:189px;width:204px;height:16px"></div>
<svg class="a" style="left:116.0px;top:194px" width="9" height="6"><path d="M0 0h9L4.5 5.4z" fill="#12283c"/></svg>
<svg class="a" style="left:131px;top:189px" width="16" height="16"  opacity=".82"><use href="#i-entity"/></svg>
<div class="t" style="left:153px;top:191px;color:#fff">blog</div>
<svg class="a" style="left:146px;top:205px" width="16" height="16" ><use href="#i-key"/></svg>
<div class="t" style="left:168px;top:207px">blog_id : long</div>
<svg class="a" style="left:146px;top:221px" width="16" height="16" ><use href="#i-prop"/></svg>
<div class="t" style="left:168px;top:223px">title : QString</div>
<svg class="a" style="left:146px;top:237px" width="16" height="16" ><use href="#i-prop"/></svg>
<div class="t" style="left:168px;top:239px">text : QString</div>
<svg class="a" style="left:146px;top:253px" width="16" height="16" ><use href="#i-rel"/></svg>
<div class="t" style="left:168px;top:255px">author (n-1 to ...</div>
<svg class="a" style="left:146px;top:269px" width="16" height="16" ><use href="#i-rel"/></svg>
<div class="t" style="left:168px;top:271px">list_of_comme...</div>
<svg class="a" style="left:146px;top:285px" width="16" height="16" ><use href="#i-rel"/></svg>
<div class="t" style="left:168px;top:287px">list_of_categor...</div>
<svg class="a" style="left:117.9px;top:304.5px" width="6" height="9"><path d="M0 0v9L5.2 4.5z" fill="#3f3f3f"/></svg>
<svg class="a" style="left:131px;top:301px" width="16" height="16" ><use href="#i-entity"/></svg>
<div class="t" style="left:153px;top:303px">category</div>
<svg class="a" style="left:116.0px;top:322px" width="9" height="6"><path d="M0 0h9L4.5 5.4z" fill="#3f3f3f"/></svg>
<svg class="a" style="left:131px;top:317px" width="16" height="16" ><use href="#i-entity"/></svg>
<div class="t" style="left:153px;top:319px">comment</div>
<svg class="a" style="left:146px;top:333px" width="16" height="16" ><use href="#i-key"/></svg>
<div class="t" style="left:168px;top:335px">comment_id : l...</div>
<svg class="a" style="left:146px;top:349px" width="16" height="16" ><use href="#i-prop"/></svg>
<div class="t" style="left:168px;top:351px">title : QString</div>
<svg class="a" style="left:146px;top:365px" width="16" height="16" ><use href="#i-prop"/></svg>
<div class="t" style="left:168px;top:367px">text : QString</div>
<svg class="a" style="left:146px;top:381px" width="16" height="16" ><use href="#i-rel"/></svg>
<div class="t" style="left:168px;top:383px">blog_id (n-1 to...</div>
<svg class="a" style="left:86.0px;top:402px" width="9" height="6"><path d="M0 0h9L4.5 5.4z" fill="#3f3f3f"/></svg>
<svg class="a" style="left:101px;top:397px" width="16" height="16" ><use href="#i-entities"/></svg>
<div class="t" style="left:123px;top:399px">All enumerations (1)</div>
<svg class="a" style="left:101.0px;top:418px" width="9" height="6"><path d="M0 0h9L4.5 5.4z" fill="#3f3f3f"/></svg>
<div class="t" style="left:116.5px;top:414px;font-size:13.3px;line-height:15px;height:15px">{}</div>
<div class="t" style="left:141.5px;top:415px">(1)</div>
<svg class="a" style="left:116.0px;top:434px" width="9" height="6"><path d="M0 0h9L4.5 5.4z" fill="#3f3f3f"/></svg>
<svg class="a" style="left:131px;top:429px" width="16" height="16" ><use href="#i-enum"/></svg>
<div class="t" style="left:153px;top:431px">sex</div>
<svg class="a" style="left:146px;top:445px" width="16" height="16" ><use href="#i-eval"/></svg>
<div class="t" style="left:168px;top:447px">male (1)</div>
<svg class="a" style="left:146px;top:461px" width="16" height="16" ><use href="#i-eval"/></svg>
<div class="t" style="left:168px;top:463px">female (2)</div>
<svg class="a" style="left:146px;top:477px" width="16" height="16" ><use href="#i-eval"/></svg>
<div class="t" style="left:168px;top:479px">unknown (3)</div>
<svg class="a" style="left:86.0px;top:498px" width="9" height="6"><path d="M0 0h9L4.5 5.4z" fill="#3f3f3f"/></svg>
<svg class="a" style="left:101px;top:493px" width="16" height="16" ><use href="#i-comments"/></svg>
<div class="t" style="left:123px;top:495px">All comments (1)</div>
<svg class="a" style="left:116px;top:509px" width="16" height="16" ><use href="#i-comment"/></svg>
<div class="t" style="left:138px;top:511px">qxBlog project</div>
<div class="btn" style="left:67px;top:653px;width:33px;height:24px"></div>
<svg class="a" style="left:75.7px;top:657.5px" width="14" height="14" ><use href="#i-plus"/></svg>
<div class="btn" style="left:102px;top:653px;width:32px;height:24px"></div>
<svg class="a" style="left:110.7px;top:657.5px" width="14" height="14" ><use href="#i-plus"/></svg>
<svg class="a" style="left:119px;top:665.5px" width="8" height="8" ><use href="#i-entity"/></svg>
<div class="btn" style="left:136px;top:653px;width:33px;height:24px"></div>
<svg class="a" style="left:144.7px;top:657.5px" width="14" height="14" ><use href="#i-plus"/></svg>
<svg class="a" style="left:153px;top:665.500px" width="8" height="8" viewBox="0 0 8 8"><rect width="8" height="8" fill="#f3f3f3"/><path d="M3 1.500h4.500M3 4h4.500M3 6.500h4.500" stroke="#8a8a8a" stroke-width="1.200"/><path d="M.8 1.500h1.200M.8 4h1.200M.8 6.500h1.200" stroke="#9a9a9a" stroke-width="1"/></svg>
<div class="btn" style="left:171px;top:653px;width:33px;height:24px"></div>
<svg class="a" style="left:179.7px;top:657.5px" width="14" height="14" ><use href="#i-minus"/></svg>
<div class="btn" style="left:206px;top:653px;width:32px;height:24px"></div>
<svg class="a" style="left:214.7px;top:657.5px" width="14" height="14" ><use href="#i-minus"/></svg>
<svg class="a" style="left:223px;top:665.5px" width="8" height="8" ><use href="#i-entity"/></svg>
<div class="btn" style="left:240px;top:653px;width:33px;height:24px"></div>
<svg class="a" style="left:248.7px;top:657.5px" width="14" height="14" ><use href="#i-minus"/></svg>
<svg class="a" style="left:257px;top:665.500px" width="8" height="8" viewBox="0 0 8 8"><rect width="8" height="8" fill="#f3f3f3"/><path d="M3 1.500h4.500M3 4h4.500M3 6.500h4.500" stroke="#8a8a8a" stroke-width="1.200"/><path d="M.8 1.500h1.200M.8 4h1.200M.8 6.500h1.200" stroke="#9a9a9a" stroke-width="1"/></svg>
<div class="inp" style="left:67px;top:681px;width:174px;height:23px"></div>
<div class="t" style="left:71px;top:686px;color:#8e8c8a">Entity filter</div>
<div class="btn" style="left:245px;top:681px;width:28px;height:24px"></div>
<svg class="a" style="left:251px;top:685px" width="16" height="16" viewBox="0 0 16 16"><ellipse cx="7" cy="13.600" rx="5" ry="1.200" fill="#c9c9c9" opacity=".6"/><path d="M9 8.400l5 5" stroke="#8d8d8d" stroke-width="2.400" stroke-linecap="round"/><circle cx="6" cy="5.600" r="4.400" fill="#dcebfb" stroke="#7fa9de" stroke-width="1.300"/><circle cx="5" cy="4.600" r="2" fill="#fff" opacity=".7"/></svg>
<div class="inp" style="left:67px;top:709px;width:174px;height:23px"></div>
<div class="t" style="left:71px;top:714px;color:#8e8c8a">Property filter</div>
<div class="btn" style="left:245px;top:709px;width:28px;height:24px"></div>
<svg class="a" style="left:251px;top:713px" width="16" height="16" viewBox="0 0 16 16"><ellipse cx="7" cy="13.600" rx="5" ry="1.200" fill="#c9c9c9" opacity=".6"/><path d="M9 8.400l5 5" stroke="#8d8d8d" stroke-width="2.400" stroke-linecap="round"/><circle cx="6" cy="5.600" r="4.400" fill="#dcebfb" stroke="#7fa9de" stroke-width="1.300"/><circle cx="5" cy="4.600" r="2" fill="#fff" opacity=".7"/></svg>
<div class="a" style="left:163.5px;top:737px;width:1px;height:1px;background:#a9a6a2"></div>
<div class="a" style="left:166.5px;top:737px;width:1px;height:1px;background:#a9a6a2"></div>
<div class="a" style="left:169.5px;top:737px;width:1px;height:1px;background:#a9a6a2"></div>
<div class="a" style="left:172.5px;top:737px;width:1px;height:1px;background:#a9a6a2"></div>
<div class="a" style="left:175.5px;top:737px;width:1px;height:1px;background:#a9a6a2"></div>
<div class="a" style="left:178.5px;top:737px;width:1px;height:1px;background:#a9a6a2"></div>
<div class="t" style="left:69px;top:744px">Navigator</div>
<div class="a" style="left:281px;top:101px;width:1024px;height:856px;background:#fbf9f7;border:1px solid #b1aeaa"></div>
<div class="a" style="left:283px;top:103px;width:1020px;height:853px;background:#fff;border:1px solid #b1aeaa"></div>
<div class="a" style="left:281px;top:75px;width:133px;height:27px;background:linear-gradient(#fefefd,#fbf9f7);border:1px solid #b1aeaa;border-bottom:none;border-radius:3px 3px 0 0"></div>
<svg class="a" style="left:293px;top:80px" width="16" height="16" ><use href="#i-entities"/></svg>
<div class="t" style="left:313px;top:83px">Entities viewer</div>
<div class="a" style="left:284px;top:104px;width:1018px;height:851px;overflow:hidden"><div class="a" style="left:-284px;top:-104px;width:1920px;height:985px">
<svg class="a" style="left:0;top:0" width="1920" height="985"><g fill="none" stroke="#b8b8ea" stroke-width="1.8">
<path d="M735 439.500H702.700V632.300H670"/>
<path d="M915 439.500H1065.300V554"/>
<path d="M825.200 565V604H827.100V643"/>
</g></svg>
<div class="t" style="left:723px;top:425px;color:#b8b8ea">n</div>
<div class="t" style="left:679px;top:618px;color:#b8b8ea">n</div>
<div class="t" style="left:923.5px;top:425px;color:#b8b8ea">1</div>
<div class="t" style="left:1069px;top:538px;color:#b8b8ea">n</div>
<div class="t" style="left:829px;top:571px;color:#b8b8ea">n</div>
<div class="t" style="left:832px;top:628px;color:#b8b8ea">1</div>
<div class="a" style="left:419px;top:162px;width:222px;height:326px;border:2px solid #ffff00;border-radius:10px;background:linear-gradient(96deg,#fff 2%,#ffffb0 88%);box-shadow:4px 4px 5px rgba(0,0,0,.34)"></div>
<div class="a" style="left:426px;top:176px;width:36px;height:2px;background:rgba(110,110,95,.36)"></div>
<div class="t" style="left:478.70000000000005px;width:120px;text-align:center;top:171px">qxBlog project</div>
<svg class="a" style="left:622px;top:171px" width="13" height="13" ><use href="#i-collapse"/></svg>
<div class="t" style="left:439px;top:196px">- Design the entity model in few</div>
<div class="t" style="left:439px;top:211px">minutes</div>
<div class="t" style="left:439px;top:241px">- Generate C++ persistent</div>
<div class="t" style="left:439px;top:256px">classes automatically</div>
<div class="t" style="left:439px;top:286px">- Generate DDL SQL script</div>
<div class="t" style="left:439px;top:301px">automatically</div>
<div class="t" style="left:439px;top:331px">- Manage schema evolution for</div>
<div class="t" style="left:439px;top:346px">each project version</div>
<div class="t" style="left:439px;top:376px">- Compile C++ native code</div>
<div class="t" style="left:439px;top:391px">everywhere : Windows, Linux,</div>
<div class="t" style="left:439px;top:406px">MacOSX, Android, iOS, etc...</div>
<div class="t" style="left:439px;top:436px">- Transfer your data model over</div>
<div class="t" style="left:439px;top:451px">network and create quickly</div>
<div class="t" style="left:439px;top:466px">client/server applications</div>
<div class="a" style="left:734px;top:313px;width:182px;height:253px;border:2px solid #b95252;border-radius:10px;background:linear-gradient(96deg,#fff 2%,#ffc6c6 88%);box-shadow:4px 4px 5px rgba(0,0,0,.34)"></div>
<div class="t" style="left:735px;width:182px;text-align:center;top:319px;font-weight:bold">blog</div>
<div class="a" style="left:741px;top:350px;width:36px;height:2px;background:rgba(110,105,100,.36)"></div>
<div class="t" style="left:773.5px;width:120px;text-align:center;top:345px">properties (3)</div>
<svg class="a" style="left:897px;top:345px" width="13" height="13" ><use href="#i-collapse"/></svg>
<svg class="a" style="left:743px;top:371px" width="16" height="16" ><use href="#i-key"/></svg>
<div class="t" style="left:762.5px;top:373px">blog_id : long</div>
<svg class="a" style="left:743px;top:399px" width="16" height="16" ><use href="#i-prop"/></svg>
<div class="t" style="left:762.5px;top:401px">title : QString</div>
<svg class="a" style="left:743px;top:427px" width="16" height="16" ><use href="#i-prop"/></svg>
<div class="t" style="left:762.5px;top:429px">text : QString</div>
<div class="a" style="left:741px;top:463px;width:36px;height:2px;background:rgba(110,105,100,.36)"></div>
<div class="t" style="left:773.5px;width:120px;text-align:center;top:458px">relationships (3)</div>
<svg class="a" style="left:897px;top:458px" width="13" height="13" ><use href="#i-collapse"/></svg>
<svg class="a" style="left:743px;top:484px" width="16" height="16" ><use href="#i-rel"/></svg>
<div class="t" style="left:762.5px;top:486px">author (n-1)</div>
<svg class="a" style="left:743px;top:512px" width="16" height="16" ><use href="#i-rel"/></svg>
<div class="t" style="left:762.5px;top:514px">list_of_comment (1-n)</div>
<svg class="a" style="left:743px;top:540px" width="16" height="16" ><use href="#i-rel"/></svg>
<div class="t" style="left:762.5px;top:542px">list_of_category (n-n)</div>
<div class="a" style="left:489px;top:534px;width:182px;height:197px;border:2px solid #6a6ae6;border-radius:10px;background:linear-gradient(96deg,#fff 2%,#c8c8ff 88%);box-shadow:4px 4px 5px rgba(0,0,0,.34)"></div>
<div class="t" style="left:490px;width:182px;text-align:center;top:540px;font-weight:bold">category</div>
<div class="a" style="left:496px;top:571px;width:36px;height:2px;background:rgba(110,105,100,.36)"></div>
<div class="t" style="left:528.5px;width:120px;text-align:center;top:566px">properties (3)</div>
<svg class="a" style="left:652px;top:566px" width="13" height="13" ><use href="#i-collapse"/></svg>
<svg class="a" style="left:498px;top:592px" width="16" height="16" ><use href="#i-key"/></svg>
<div class="t" style="left:517.5px;top:594px">category_id : QString</div>
<svg class="a" style="left:498px;top:620px" width="16" height="16" ><use href="#i-prop"/></svg>
<div class="t" style="left:517.5px;top:622px">name : QString</div>
<svg class="a" style="left:498px;top:648px" width="16" height="16" ><use href="#i-prop"/></svg>
<div class="t" style="left:517.5px;top:650px">description : QString</div>
<div class="a" style="left:496px;top:684px;width:36px;height:2px;background:rgba(110,105,100,.36)"></div>
<div class="t" style="left:528.5px;width:120px;text-align:center;top:679px">relationships (1)</div>
<svg class="a" style="left:652px;top:679px" width="13" height="13" ><use href="#i-collapse"/></svg>
<svg class="a" style="left:498px;top:705px" width="16" height="16" ><use href="#i-rel"/></svg>
<div class="t" style="left:517.5px;top:707px">list_of_blog (n-n)</div>
<div class="a" style="left:736px;top:642px;width:182px;height:253px;border:2px solid #6a6ae6;border-radius:10px;background:linear-gradient(96deg,#fff 2%,#c8c8ff 88%);box-shadow:4px 4px 5px rgba(0,0,0,.34)"></div>
<div class="t" style="left:737px;width:182px;text-align:center;top:648px;font-weight:bold">author</div>
<div class="a" style="left:743px;top:679px;width:36px;height:2px;background:rgba(110,105,100,.36)"></div>
<div class="t" style="left:775.5px;width:120px;text-align:center;top:674px">properties (5)</div>
<svg class="a" style="left:899px;top:674px" width="13" height="13" ><use href="#i-collapse"/></svg>
<svg class="a" style="left:745px;top:700px" width="16" height="16" ><use href="#i-key"/></svg>
<div class="t" style="left:764.5px;top:702px">author_id : long</div>
<svg class="a" style="left:745px;top:728px" width="16" height="16" ><use href="#i-prop"/></svg>
<div class="t" style="left:764.5px;top:730px">firstname : QString</div>
<svg class="a" style="left:745px;top:756px" width="16" height="16" ><use href="#i-prop"/></svg>
<div class="t" style="left:764.5px;top:758px">lastname : QString</div>
<svg class="a" style="left:745px;top:784px" width="16" height="16" ><use href="#i-prop"/></svg>
<div class="t" style="left:764.5px;top:786px">birthdate : QDateTime</div>
<svg class="a" style="left:745px;top:812px" width="16" height="16" ><use href="#i-prop"/></svg>
<div class="t" style="left:764.5px;top:814px">sex : sex::enum_sex</div>
<div class="a" style="left:743px;top:848px;width:36px;height:2px;background:rgba(110,105,100,.36)"></div>
<div class="t" style="left:775.5px;width:120px;text-align:center;top:843px">relationships (1)</div>
<svg class="a" style="left:899px;top:843px" width="13" height="13" ><use href="#i-collapse"/></svg>
<svg class="a" style="left:745px;top:869px" width="16" height="16" ><use href="#i-rel"/></svg>
<div class="t" style="left:764.5px;top:871px">list_of_blog (1-n)</div>
<div class="a" style="left:974px;top:552px;width:182px;height:197px;border:2px solid #6a6ae6;border-radius:10px;background:linear-gradient(96deg,#fff 2%,#c8c8ff 88%);box-shadow:4px 4px 5px rgba(0,0,0,.34)"></div>
<div class="t" style="left:975px;width:182px;text-align:center;top:558px;font-weight:bold">comment</div>
<div class="a" style="left:981px;top:589px;width:36px;height:2px;background:rgba(110,105,100,.36)"></div>
<div class="t" style="left:1013.5px;width:120px;text-align:center;top:584px">properties (3)</div>
<svg class="a" style="left:1137px;top:584px" width="13" height="13" ><use href="#i-collapse"/></svg>
<svg class="a" style="left:983px;top:610px" width="16" height="16" ><use href="#i-key"/></svg>
<div class="t" style="left:1002.5px;top:612px">comment_id : long</div>
<svg class="a" style="left:983px;top:638px" width="16" height="16" ><use href="#i-prop"/></svg>
<div class="t" style="left:1002.5px;top:640px">title : QString</div>
<svg class="a" style="left:983px;top:666px" width="16" height="16" ><use href="#i-prop"/></svg>
<div class="t" style="left:1002.5px;top:668px">text : QString</div>
<div class="a" style="left:981px;top:702px;width:36px;height:2px;background:rgba(110,105,100,.36)"></div>
<div class="t" style="left:1013.5px;width:120px;text-align:center;top:697px">relationships (1)</div>
<svg class="a" style="left:1137px;top:697px" width="13" height="13" ><use href="#i-collapse"/></svg>
<svg class="a" style="left:983px;top:723px" width="16" height="16" ><use href="#i-rel"/></svg>
<div class="t" style="left:1002.5px;top:725px">blog_id (n-1)</div>
<div class="a" style="left:984px;top:261px;width:182px;height:125px;border:2px solid #c050c0;border-radius:10px;background:linear-gradient(96deg,#fff 2%,#ffccff 88%);box-shadow:4px 4px 5px rgba(0,0,0,.34)"></div>
<div class="t" style="left:985px;width:182px;text-align:center;top:267px;font-weight:bold">sex</div>
<div class="a" style="left:991px;top:298px;width:36px;height:2px;background:rgba(110,105,100,.36)"></div>
<div class="t" style="left:1023.5px;width:120px;text-align:center;top:293px">values (3)</div>
<svg class="a" style="left:1147px;top:293px" width="13" height="13" ><use href="#i-collapse"/></svg>
<div class="t" style="left:1000px;top:318px">male (1)</div>
<div class="t" style="left:1000px;top:341px">female (2)</div>
<div class="t" style="left:1000px;top:364px">unknown (3)</div>
</div></div>
<div class="a" style="left:66px;top:761px;width:209px;height:197px;background:#fff;border:1px solid #b5b1ad;border-top:1px solid #2a2ae0;overflow:hidden">
<div class="a" style="left:-80.3px;top:-26.1px;width:1920px;height:985px;transform:scale(.2305);transform-origin:0 0">
<svg class="a" style="left:0;top:0" width="1920" height="985"><g fill="none" stroke="#b8b8ea" stroke-width="1.8">
<path d="M735 439.500H702.700V632.300H670"/>
<path d="M915 439.500H1065.300V554"/>
<path d="M825.200 565V604H827.100V643"/>
</g></svg>
<div class="t" style="left:723px;top:425px;color:#b8b8ea">n</div>
<div class="t" style="left:679px;top:618px;color:#b8b8ea">n</div>
<div class="t" style="left:923.5px;top:425px;color:#b8b8ea">1</div>
<div class="t" style="left:1069px;top:538px;color:#b8b8ea">n</div>
<div class="t" style="left:829px;top:571px;color:#b8b8ea">n</div>
<div class="t" style="left:832px;top:628px;color:#b8b8ea">1</div>
<div class="a" style="left:419px;top:162px;width:222px;height:326px;border:2px solid #ffff00;border-radius:10px;background:linear-gradient(96deg,#fff 2%,#ffffb0 88%);box-shadow:4px 4px 5px rgba(0,0,0,.34)"></div>
<div class="a" style="left:426px;top:176px;width:36px;height:2px;background:rgba(110,110,95,.36)"></div>
<div class="t" style="left:478.70000000000005px;width:120px;text-align:center;top:171px">qxBlog project</div>
<svg class="a" style="left:622px;top:171px" width="13" height="13" ><use href="#i-collapse"/></svg>
<div class="t" style="left:439px;top:196px">- Design the entity model in few</div>
<div class="t" style="left:439px;top:211px">minutes</div>
<div class="t" style="left:439px;top:241px">- Generate C++ persistent</div>
<div class="t" style="left:439px;top:256px">classes automatically</div>
<div class="t" style="left:439px;top:286px">- Generate DDL SQL script</div>
<div class="t" style="left:439px;top:301px">automatically</div>
<div class="t" style="left:439px;top:331px">- Manage schema evolution for</div>
<div class="t" style="left:439px;top:346px">each project version</div>
<div class="t" style="left:439px;top:376px">- Compile C++ native code</div>
<div class="t" style="left:439px;top:391px">everywhere : Windows, Linux,</div>
<div class="t" style="left:439px;top:406px">MacOSX, Android, iOS, etc...</div>
<div class="t" style="left:439px;top:436px">- Transfer your data model over</div>
<div class="t" style="left:439px;top:451px">network and create quickly</div>
<div class="t" style="left:439px;top:466px">client/server applications</div>
<div class="a" style="left:734px;top:313px;width:182px;height:253px;border:2px solid #b95252;border-radius:10px;background:linear-gradient(96deg,#fff 2%,#ffc6c6 88%);box-shadow:4px 4px 5px rgba(0,0,0,.34)"></div>
<div class="t" style="left:735px;width:182px;text-align:center;top:319px;font-weight:bold">blog</div>
<div class="a" style="left:741px;top:350px;width:36px;height:2px;background:rgba(110,105,100,.36)"></div>
<div class="t" style="left:773.5px;width:120px;text-align:center;top:345px">properties (3)</div>
<svg class="a" style="left:897px;top:345px" width="13" height="13" ><use href="#i-collapse"/></svg>
<svg class="a" style="left:743px;top:371px" width="16" height="16" ><use href="#i-key"/></svg>
<div class="t" style="left:762.5px;top:373px">blog_id : long</div>
<svg class="a" style="left:743px;top:399px" width="16" height="16" ><use href="#i-prop"/></svg>
<div class="t" style="left:762.5px;top:401px">title : QString</div>
<svg class="a" style="left:743px;top:427px" width="16" height="16" ><use href="#i-prop"/></svg>
<div class="t" style="left:762.5px;top:429px">text : QString</div>
<div class="a" style="left:741px;top:463px;width:36px;height:2px;background:rgba(110,105,100,.36)"></div>
<div class="t" style="left:773.5px;width:120px;text-align:center;top:458px">relationships (3)</div>
<svg class="a" style="left:897px;top:458px" width="13" height="13" ><use href="#i-collapse"/></svg>
<svg class="a" style="left:743px;top:484px" width="16" height="16" ><use href="#i-rel"/></svg>
<div class="t" style="left:762.5px;top:486px">author (n-1)</div>
<svg class="a" style="left:743px;top:512px" width="16" height="16" ><use href="#i-rel"/></svg>
<div class="t" style="left:762.5px;top:514px">list_of_comment (1-n)</div>
<svg class="a" style="left:743px;top:540px" width="16" height="16" ><use href="#i-rel"/></svg>
<div class="t" style="left:762.5px;top:542px">list_of_category (n-n)</div>
<div class="a" style="left:489px;top:534px;width:182px;height:197px;border:2px solid #6a6ae6;border-radius:10px;background:linear-gradient(96deg,#fff 2%,#c8c8ff 88%);box-shadow:4px 4px 5px rgba(0,0,0,.34)"></div>
<div class="t" style="left:490px;width:182px;text-align:center;top:540px;font-weight:bold">category</div>
<div class="a" style="left:496px;top:571px;width:36px;height:2px;background:rgba(110,105,100,.36)"></div>
<div class="t" style="left:528.5px;width:120px;text-align:center;top:566px">properties (3)</div>
<svg class="a" style="left:652px;top:566px" width="13" height="13" ><use href="#i-collapse"/></svg>
<svg class="a" style="left:498px;top:592px" width="16" height="16" ><use href="#i-key"/></svg>
<div class="t" style="left:517.5px;top:594px">category_id : QString</div>
<svg class="a" style="left:498px;top:620px" width="16" height="16" ><use href="#i-prop"/></svg>
<div class="t" style="left:517.5px;top:622px">name : QString</div>
<svg class="a" style="left:498px;top:648px" width="16" height="16" ><use href="#i-prop"/></svg>
<div class="t" style="left:517.5px;top:650px">description : QString</div>
<div class="a" style="left:496px;top:684px;width:36px;height:2px;background:rgba(110,105,100,.36)"></div>
<div class="t" style="left:528.5px;width:120px;text-align:center;top:679px">relationships (1)</div>
<svg class="a" style="left:652px;top:679px" width="13" height="13" ><use href="#i-collapse"/></svg>
<svg class="a" style="left:498px;top:705px" width="16" height="16" ><use href="#i-rel"/></svg>
<div class="t" style="left:517.5px;top:707px">list_of_blog (n-n)</div>
<div class="a" style="left:736px;top:642px;width:182px;height:253px;border:2px solid #6a6ae6;border-radius:10px;background:linear-gradient(96deg,#fff 2%,#c8c8ff 88%);box-shadow:4px 4px 5px rgba(0,0,0,.34)"></div>
<div class="t" style="left:737px;width:182px;text-align:center;top:648px;font-weight:bold">author</div>
<div class="a" style="left:743px;top:679px;width:36px;height:2px;background:rgba(110,105,100,.36)"></div>
<div class="t" style="left:775.5px;width:120px;text-align:center;top:674px">properties (5)</div>
<svg class="a" style="left:899px;top:674px" width="13" height="13" ><use href="#i-collapse"/></svg>
<svg class="a" style="left:745px;top:700px" width="16" height="16" ><use href="#i-key"/></svg>
<div class="t" style="left:764.5px;top:702px">author_id : long</div>
<svg class="a" style="left:745px;top:728px" width="16" height="16" ><use href="#i-prop"/></svg>
<div class="t" style="left:764.5px;top:730px">firstname : QString</div>
<svg class="a" style="left:745px;top:756px" width="16" height="16" ><use href="#i-prop"/></svg>
<div class="t" style="left:764.5px;top:758px">lastname : QString</div>
<svg class="a" style="left:745px;top:784px" width="16" height="16" ><use href="#i-prop"/></svg>
<div class="t" style="left:764.5px;top:786px">birthdate : QDateTime</div>
<svg class="a" style="left:745px;top:812px" width="16" height="16" ><use href="#i-prop"/></svg>
<div class="t" style="left:764.5px;top:814px">sex : sex::enum_sex</div>
<div class="a" style="left:743px;top:848px;width:36px;height:2px;background:rgba(110,105,100,.36)"></div>
<div class="t" style="left:775.5px;width:120px;text-align:center;top:843px">relationships (1)</div>
<svg class="a" style="left:899px;top:843px" width="13" height="13" ><use href="#i-collapse"/></svg>
<svg class="a" style="left:745px;top:869px" width="16" height="16" ><use href="#i-rel"/></svg>
<div class="t" style="left:764.5px;top:871px">list_of_blog (1-n)</div>
<div class="a" style="left:974px;top:552px;width:182px;height:197px;border:2px solid #6a6ae6;border-radius:10px;background:linear-gradient(96deg,#fff 2%,#c8c8ff 88%);box-shadow:4px 4px 5px rgba(0,0,0,.34)"></div>
<div class="t" style="left:975px;width:182px;text-align:center;top:558px;font-weight:bold">comment</div>
<div class="a" style="left:981px;top:589px;width:36px;height:2px;background:rgba(110,105,100,.36)"></div>
<div class="t" style="left:1013.5px;width:120px;text-align:center;top:584px">properties (3)</div>
<svg class="a" style="left:1137px;top:584px" width="13" height="13" ><use href="#i-collapse"/></svg>
<svg class="a" style="left:983px;top:610px" width="16" height="16" ><use href="#i-key"/></svg>
<div class="t" style="left:1002.5px;top:612px">comment_id : long</div>
<svg class="a" style="left:983px;top:638px" width="16" height="16" ><use href="#i-prop"/></svg>
<div class="t" style="left:1002.5px;top:640px">title : QString</div>
<svg class="a" style="left:983px;top:666px" width="16" height="16" ><use href="#i-prop"/></svg>
<div class="t" style="left:1002.5px;top:668px">text : QString</div>
<div class="a" style="left:981px;top:702px;width:36px;height:2px;background:rgba(110,105,100,.36)"></div>
<div class="t" style="left:1013.5px;width:120px;text-align:center;top:697px">relationships (1)</div>
<svg class="a" style="left:1137px;top:697px" width="13" height="13" ><use href="#i-collapse"/></svg>
<svg class="a" style="left:983px;top:723px" width="16" height="16" ><use href="#i-rel"/></svg>
<div class="t" style="left:1002.5px;top:725px">blog_id (n-1)</div>
<div class="a" style="left:984px;top:261px;width:182px;height:125px;border:2px solid #c050c0;border-radius:10px;background:linear-gradient(96deg,#fff 2%,#ffccff 88%);box-shadow:4px 4px 5px rgba(0,0,0,.34)"></div>
<div class="t" style="left:985px;width:182px;text-align:center;top:267px;font-weight:bold">sex</div>
<div class="a" style="left:991px;top:298px;width:36px;height:2px;background:rgba(110,105,100,.36)"></div>
<div class="t" style="left:1023.5px;width:120px;text-align:center;top:293px">values (3)</div>
<svg class="a" style="left:1147px;top:293px" width="13" height="13" ><use href="#i-collapse"/></svg>
<div class="t" style="left:1000px;top:318px">male (1)</div>
<div class="t" style="left:1000px;top:341px">female (2)</div>
<div class="t" style="left:1000px;top:364px">unknown (3)</div>
</div></div>
<div class="t" style="left:1315px;top:78px">Parameters</div>
<svg class="a" style="left:1907px;top:79px" width="11" height="11" viewBox="0 0 11 11"><rect x=".5" y=".5" width="10" height="10" rx="1.800" fill="#ebe8e4" stroke="#5e5c57" stroke-width="1"/><path d="M3 3l5 5M8 3L3 8" stroke="#55534e" stroke-width="2.100"/></svg>
<div class="a" style="left:1311px;top:120px;width:608px;height:836px;background:#fff;border:1px solid #b9b5b1"></div>
<div class="a" style="left:1311px;top:94px;width:578px;height:27px;overflow:hidden">
<div class="a" style="left:117px;top:2px;width:132px;height:25px;border:1px solid #b9b5b1;border-radius:3px 3px 0 0;background:linear-gradient(#ebe8e4,#e3dfdb)"></div>
<svg class="a" style="left:129px;top:6px" width="16" height="16" ><use href="#i-prop"/></svg>
<div class="t" style="left:149px;top:9px">Property - title</div>
<div class="a" style="left:248px;top:2px;width:119px;height:25px;border:1px solid #b9b5b1;border-radius:3px 3px 0 0;background:linear-gradient(#ebe8e4,#e3dfdb)"></div>
<svg class="a" style="left:260px;top:6px" width="16" height="16" ><use href="#i-rel"/></svg>
<div class="t" style="left:280px;top:9px">Relationship</div>
<div class="a" style="left:366px;top:2px;width:123px;height:25px;border:1px solid #b9b5b1;border-radius:3px 3px 0 0;background:linear-gradient(#ebe8e4,#e3dfdb)"></div>
<svg class="a" style="left:378px;top:6px" width="16" height="16" ><use href="#i-enum"/></svg>
<div class="t" style="left:398px;top:9px">Enumeration</div>
<div class="a" style="left:488px;top:2px;width:132px;height:25px;border:1px solid #b9b5b1;border-radius:3px 3px 0 0;background:linear-gradient(#ebe8e4,#e3dfdb)"></div>
<svg class="a" style="left:500px;top:6px" width="16" height="16" viewBox="0 0 16 16"><rect x="1.600" y=".6" width="12.800" height="14.800" fill="#fbfbfb" stroke="#e3e3e3" stroke-width=".6"/><path d="M6.800 6.700A2.300 2.500 0 1 0 6.800 9.700" fill="none" stroke="#ee2c34" stroke-width="1.050"/><path d="M7.800 8.200h2.400M9 7v2.400M11 8.200h2.400M12.200 7v2.400" stroke="#ee2c34" stroke-width=".75"/></svg>
<div class="t" style="left:520px;top:9px">C++ prev</div>
</div>
<div class="a" style="left:1311px;top:94px;width:118px;height:27px;border:1px solid #b9b5b1;border-bottom:none;border-radius:3px 3px 0 0;background:linear-gradient(#fdfcfb,#f8f6f4 80%,#fff)"></div>
<svg class="a" style="left:1323px;top:99px" width="16" height="16" ><use href="#i-entity"/></svg>
<div class="t" style="left:1343px;top:102px">Entity - blog</div>
<div class="btn" style="left:1889px;top:94px;width:14px;height:28px;border-color:#c4c0bc;background:linear-gradient(#fefdfd,#f3f1ee);box-shadow:0 0 0 1px rgba(255,255,255,.6)"></div>
<svg class="a" style="left:1893.5px;top:103px" width="5" height="9"><path d="M5 0v9L0 4.500z" fill="#cfcdca"/></svg>
<div class="btn" style="left:1905px;top:94px;width:14px;height:28px;border-color:#c4c0bc;background:linear-gradient(#fefdfd,#f3f1ee);box-shadow:0 0 0 1px rgba(255,255,255,.6)"></div>
<svg class="a" style="left:1909.5px;top:103px" width="5" height="9"><path d="M0 0v9L5 4.500z" fill="#3a3a38"/></svg>
<div class="t blue" style="left:1326px;top:136px">Entity information (version 0)</div>
<div class="gb" style="left:1325px;top:152px;width:582px;height:114px"></div>
<div class="t" style="left:1331px;top:163px"><b>Name :</b></div>
<div class="t" style="left:1585px;top:163px">Table name :</div>
<div class="inp" style="left:1456px;top:158px;width:126px;height:23px"></div>
<div class="inp" style="left:1737px;top:158px;width:163px;height:23px"></div>
<div class="t" style="left:1331px;top:189px">Namespace :</div>
<div class="t" style="left:1585px;top:189px">Description :</div>
<div class="inp" style="left:1456px;top:184px;width:126px;height:23px"></div>
<div class="inp" style="left:1737px;top:184px;width:163px;height:23px"></div>
<div class="t" style="left:1331px;top:215px">Inherit from :</div>
<div class="t" style="left:1331px;top:241px">Soft delete column :</div>
<div class="t" style="left:1585px;top:241px">Validator method name :</div>
<div class="inp" style="left:1456px;top:236px;width:126px;height:23px"></div>
<div class="inp" style="left:1737px;top:236px;width:163px;height:23px"></div>
<div class="t" style="left:1460px;top:163px">blog</div>
<div class="t" style="left:1741px;top:163px">t_blog</div>
<div class="btn" style="left:1456px;top:210px;width:126px;height:23px;border-color:#b5b1ad;background:linear-gradient(#fbfaf9,#f0edea 60%,#e9e6e2)"></div>
<svg class="a" style="left:1567.75px;top:219.70000000000002px" width="7.5" height="4.2"><path d="M0 0h7.5L3.75 4.2z" fill="#4a4a4a"/></svg>
<div class="cb" style="left:1737px;top:214px;background:#fff;border-color:#bcb6b2"></div>
<div class="t" style="left:1756px;top:215px">Read only</div>
<div class="cb" style="left:1824px;top:214px;background:#fff;border-color:#bcb6b2"></div>
<div class="t" style="left:1843px;top:215px">Abstract</div>
<div class="t blue" style="left:1326px;top:275px">Entity triggers</div>
<div class="gb" style="left:1325px;top:291px;width:582px;height:57px"></div>
<div class="cb" style="left:1331px;top:300px;background:#fff;border-color:#bcb6b2"></div>
<div class="t" style="left:1350px;top:301px">Before fetch</div>
<div class="cb" style="left:1474px;top:300px;background:#fff;border-color:#bcb6b2"></div>
<div class="t" style="left:1493px;top:301px">After fetch</div>
<div class="cb" style="left:1617px;top:300px;background:#fff;border-color:#bcb6b2"></div>
<div class="t" style="left:1636px;top:301px">Before insert</div>
<div class="cb" style="left:1760px;top:300px;background:#fff;border-color:#bcb6b2"></div>
<div class="t" style="left:1779px;top:301px">After insert</div>
<div class="cb" style="left:1331px;top:324px;background:#fff;border-color:#bcb6b2"></div>
<div class="t" style="left:1350px;top:325px">Before update</div>
<div class="cb" style="left:1474px;top:324px;background:#fff;border-color:#bcb6b2"></div>
<div class="t" style="left:1493px;top:325px">After update</div>
<div class="cb" style="left:1617px;top:324px;background:#fff;border-color:#bcb6b2"></div>
<div class="t" style="left:1636px;top:325px">Before delete</div>
<div class="cb" style="left:1760px;top:324px;background:#fff;border-color:#bcb6b2"></div>
<div class="t" style="left:1779px;top:325px">After delete</div>
<div class="t blue" style="left:1326px;top:358px">Primary key property</div>
<div class="gb" style="left:1325px;top:374px;width:582px;height:62px"></div>
<div class="t" style="left:1331px;top:385px"><b>Name :</b></div>
<div class="t" style="left:1331px;top:411px"><b>Type :</b></div>
<div class="inp" style="left:1382px;top:380px;width:210px;height:23px"></div>
<div class="t" style="left:1386px;top:385px">blog_id</div>
<div class="inp" style="left:1382px;top:406px;width:210px;height:23px"></div>
<div class="a" style="left:1572px;top:406px;width:20px;height:23px;border:1px solid #b0aca8;border-radius:0 3px 3px 0;background:linear-gradient(#fbfaf9,#e9e6e2)"></div>
<div class="t" style="left:1387px;top:411px">long</div>
<svg class="a" style="left:1578.25px;top:415.7px" width="7.5" height="4.2"><path d="M0 0h7.5L3.75 4.2z" fill="#4a4a4a"/></svg>
<div class="t" style="left:1595px;top:385px">Column name :</div>
<div class="t" style="left:1595px;top:411px">Description :</div>
<div class="inp" style="left:1690px;top:380px;width:210px;height:23px"></div>
<div class="inp" style="left:1690px;top:406px;width:210px;height:23px"></div>
<div class="cb" style="left:1325px;top:443px;background:#fff;border-color:#bcb6b2"></div><svg class="a" style="left:1328px;top:446px" width="9" height="9" viewBox="0 0 9 9"><path d="M1 4.600L3.400 7.600 8 .8" fill="none" stroke="#111" stroke-width="1.700"/></svg>
<div class="t blue" style="left:1345px;top:445px">List of properties (2)</div>
<div class="gb" style="left:1325px;top:461px;width:582px;height:134px"></div>
<div class="btn" style="left:1327px;top:499px;width:12px;height:24px"></div>
<svg class="a" style="left:1329.8px;top:509px" width="6.400" height="4"><path d="M0 4h6.400L3.200 0z" fill="#111"/></svg>
<div class="btn" style="left:1327px;top:533px;width:12px;height:24px"></div>
<svg class="a" style="left:1329.8px;top:543px" width="6.400" height="4"><path d="M0 0h6.400L3.200 4z" fill="#111"/></svg>
<div class="a" style="left:1340px;top:467px;width:560px;height:121px;background:#fff;border:1px solid #b6b2ae"></div>
<div class="a" style="left:1341px;top:468px;width:544px;height:19px;background:#e6e3df"></div>
<div class="a" style="left:1341px;top:468px;width:538px;height:18px;background:linear-gradient(#f9f8f6,#efece9)"></div>
<div class="a" style="left:1341px;top:486px;width:538px;height:1px;background:#b9b5b1"></div>
<div class="a" style="left:1369px;top:468px;width:1px;height:18px;background:#c9c6c2"></div>
<div class="a" style="left:1443px;top:468px;width:1px;height:18px;background:#c9c6c2"></div>
<div class="a" style="left:1372px;top:468px;width:69px;height:18px;overflow:hidden"><div class="t" style="left:-50px;width:169px;text-align:center;top:3px">Name</div></div>
<div class="a" style="left:1517px;top:468px;width:1px;height:18px;background:#c9c6c2"></div>
<div class="a" style="left:1446px;top:468px;width:69px;height:18px;overflow:hidden"><div class="t" style="left:-50px;width:169px;text-align:center;top:3px">Type</div></div>
<div class="a" style="left:1591px;top:468px;width:1px;height:18px;background:#c9c6c2"></div>
<div class="a" style="left:1520px;top:468px;width:69px;height:18px;overflow:hidden"><div class="t" style="left:-50px;width:169px;text-align:center;top:3px">Decoration</div></div>
<div class="a" style="left:1665px;top:468px;width:1px;height:18px;background:#c9c6c2"></div>
<div class="a" style="left:1594px;top:468px;width:69px;height:18px;overflow:hidden"><div class="t" style="left:-50px;width:169px;text-align:center;top:3px">Collection</div></div>
<div class="a" style="left:1739px;top:468px;width:1px;height:18px;background:#c9c6c2"></div>
<div class="a" style="left:1668px;top:468px;width:69px;height:18px;overflow:hidden"><div class="t" style="left:-50px;width:169px;text-align:center;top:3px">Default value</div></div>
<div class="a" style="left:1781px;top:468px;width:1px;height:18px;background:#c9c6c2"></div>
<div class="a" style="left:1742px;top:468px;width:37px;height:18px;overflow:hidden"><div class="t" style="left:-50px;width:137px;text-align:center;top:3px">Index</div></div>
<div class="a" style="left:1849px;top:468px;width:1px;height:18px;background:#c9c6c2"></div>
<div class="a" style="left:1784px;top:468px;width:63px;height:18px;overflow:hidden"><div class="t" style="left:-50px;width:163px;text-align:center;top:3px">Transient</div></div>
<div class="a" style="left:1878px;top:468px;width:1px;height:18px;background:#c9c6c2"></div>
<div class="a" style="left:1341px;top:520px;width:538px;height:1px;background:#cfccc8"></div>
<div class="a" style="left:1341px;top:521px;width:538px;height:33px;background:#f7f6f5"></div>
<div class="a" style="left:1369px;top:521px;width:74px;height:33px;background:#fff"></div>
<div class="a" style="left:1665px;top:521px;width:74px;height:33px;background:#fff"></div>
<div class="a" style="left:1341px;top:554px;width:538px;height:1px;background:#cfccc8"></div>
<div class="a" style="left:1369px;top:487px;width:1px;height:100px;background:#cfccc8"></div>
<div class="a" style="left:1443px;top:487px;width:1px;height:100px;background:#cfccc8"></div>
<div class="a" style="left:1517px;top:487px;width:1px;height:100px;background:#cfccc8"></div>
<div class="a" style="left:1591px;top:487px;width:1px;height:100px;background:#cfccc8"></div>
<div class="a" style="left:1665px;top:487px;width:1px;height:100px;background:#cfccc8"></div>
<div class="a" style="left:1739px;top:487px;width:1px;height:100px;background:#cfccc8"></div>
<div class="a" style="left:1781px;top:487px;width:1px;height:100px;background:#cfccc8"></div>
<div class="a" style="left:1849px;top:487px;width:1px;height:100px;background:#cfccc8"></div>
<svg class="a" style="left:1344px;top:495px" width="16" height="16" ><use href="#i-prop"/></svg>
<div class="t" style="left:1373px;top:497px">title</div>
<div class="inp" style="left:1444px;top:487px;width:73px;height:33px"></div>
<div class="a" style="left:1497px;top:487px;width:20px;height:33px;border:1px solid #b0aca8;border-radius:0 3px 3px 0;background:linear-gradient(#fbfaf9,#e9e6e2)"></div>
<div class="t" style="left:1448px;top:497px">QString</div>
<svg class="a" style="left:1503.25px;top:501.7px" width="7.5" height="4.2"><path d="M0 0h7.5L3.75 4.2z" fill="#4a4a4a"/></svg>
<div class="btn" style="left:1518px;top:487px;width:73px;height:33px;border-color:#b5b1ad;background:linear-gradient(#fbfaf9,#f0edea 60%,#e9e6e2)"></div>
<svg class="a" style="left:1576.75px;top:501.7px" width="7.5" height="4.2"><path d="M0 0h7.5L3.75 4.2z" fill="#4a4a4a"/></svg>
<div class="btn" style="left:1592px;top:487px;width:73px;height:33px;border-color:#b5b1ad;background:linear-gradient(#fbfaf9,#f0edea 60%,#e9e6e2)"></div>
<svg class="a" style="left:1650.75px;top:501.7px" width="7.5" height="4.2"><path d="M0 0h7.5L3.75 4.2z" fill="#4a4a4a"/></svg>
<div class="cb" style="left:1753px;top:496px;background:#fff;border-color:#bcb6b2"></div><svg class="a" style="left:1756px;top:499px" width="9" height="9" viewBox="0 0 9 9"><path d="M1 4.600L3.400 7.600 8 .8" fill="none" stroke="#111" stroke-width="1.700"/></svg>
<div class="cb" style="left:1808px;top:496px;background:#fff;border-color:#bcb6b2"></div>
<div class="btn" style="left:1850px;top:487px;width:28px;height:33px"></div>
<svg class="a" style="left:1856.5px;top:495.0px" width="15" height="15" ><use href="#i-del"/></svg>
<svg class="a" style="left:1344px;top:529px" width="16" height="16" ><use href="#i-prop"/></svg>
<div class="t" style="left:1373px;top:531px">text</div>
<div class="inp" style="left:1444px;top:521px;width:73px;height:33px"></div>
<div class="a" style="left:1497px;top:521px;width:20px;height:33px;border:1px solid #b0aca8;border-radius:0 3px 3px 0;background:linear-gradient(#fbfaf9,#e9e6e2)"></div>
<div class="t" style="left:1448px;top:531px">QString</div>
<svg class="a" style="left:1503.25px;top:535.6999999999999px" width="7.5" height="4.2"><path d="M0 0h7.5L3.75 4.2z" fill="#4a4a4a"/></svg>
<div class="btn" style="left:1518px;top:521px;width:73px;height:33px;border-color:#b5b1ad;background:linear-gradient(#fbfaf9,#f0edea 60%,#e9e6e2)"></div>
<svg class="a" style="left:1576.75px;top:535.6999999999999px" width="7.5" height="4.2"><path d="M0 0h7.5L3.75 4.2z" fill="#4a4a4a"/></svg>
<div class="btn" style="left:1592px;top:521px;width:73px;height:33px;border-color:#b5b1ad;background:linear-gradient(#fbfaf9,#f0edea 60%,#e9e6e2)"></div>
<svg class="a" style="left:1650.75px;top:535.6999999999999px" width="7.5" height="4.2"><path d="M0 0h7.5L3.75 4.2z" fill="#4a4a4a"/></svg>
<div class="cb" style="left:1753px;top:530px;background:#fff;border-color:#bcb6b2"></div>
<div class="cb" style="left:1808px;top:530px;background:#fff;border-color:#bcb6b2"></div>
<div class="btn" style="left:1850px;top:521px;width:28px;height:33px"></div>
<svg class="a" style="left:1856.5px;top:529.0px" width="15" height="15" ><use href="#i-del"/></svg>
<svg class="a" style="left:1344px;top:563px" width="16" height="16" ><use href="#i-prop"/></svg>
<div class="inp" style="left:1444px;top:555px;width:73px;height:33px"></div>
<div class="a" style="left:1497px;top:555px;width:20px;height:33px;border:1px solid #b0aca8;border-radius:0 3px 3px 0;background:linear-gradient(#fbfaf9,#e9e6e2)"></div>
<div class="t" style="left:1448px;top:565px">QString</div>
<svg class="a" style="left:1503.25px;top:569.6999999999999px" width="7.5" height="4.2"><path d="M0 0h7.5L3.75 4.2z" fill="#4a4a4a"/></svg>
<div class="btn" style="left:1518px;top:555px;width:73px;height:33px;border-color:#b5b1ad;background:linear-gradient(#fbfaf9,#f0edea 60%,#e9e6e2)"></div>
<svg class="a" style="left:1576.75px;top:569.6999999999999px" width="7.5" height="4.2"><path d="M0 0h7.5L3.75 4.2z" fill="#4a4a4a"/></svg>
<div class="btn" style="left:1592px;top:555px;width:73px;height:33px;border-color:#b5b1ad;background:linear-gradient(#fbfaf9,#f0edea 60%,#e9e6e2)"></div>
<svg class="a" style="left:1650.75px;top:569.6999999999999px" width="7.5" height="4.2"><path d="M0 0h7.5L3.75 4.2z" fill="#4a4a4a"/></svg>
<div class="cb" style="left:1753px;top:564px;background:#fff;border-color:#bcb6b2"></div>
<div class="cb" style="left:1808px;top:564px;background:#fff;border-color:#bcb6b2"></div>
<div class="btn" style="left:1850px;top:555px;width:28px;height:33px"></div>
<svg class="a" style="left:1856.5px;top:563.0px" width="15" height="15" ><use href="#i-del"/></svg>
<div class="a" style="left:1885px;top:468px;width:14px;height:119px;background:linear-gradient(90deg,#eceae7,#f8f7f6 55%,#f2f1ef);border-left:1px solid #bdb9b5"></div>
<div class="a" style="left:1885px;top:468px;width:14px;height:14px;background:linear-gradient(#faf9f8,#ebe8e5);border:1px solid #c3c0bc;border-top:none;border-right:none"></div>
<div class="a" style="left:1885px;top:573px;width:14px;height:14px;background:linear-gradient(#faf9f8,#ebe8e5);border:1px solid #c3c0bc;border-bottom:none;border-right:none"></div>
<div class="a" style="left:1885px;top:542px;width:14px;height:32px;background:linear-gradient(90deg,#dedbd7,#e4e1de);border:1px solid #c3c0bc;border-right:none"></div>
<svg class="a" style="left:1888.5px;top:473px" width="8" height="4.500"><path d="M0 4.500h8L4 0z" fill="#4a4a4a"/></svg>
<svg class="a" style="left:1888.5px;top:577.5px" width="8" height="4.500"><path d="M0 0h8L4 4.500z" fill="#4a4a4a"/></svg>
<div class="cb" style="left:1325px;top:602px;background:#fff;border-color:#bcb6b2"></div><svg class="a" style="left:1328px;top:605px" width="9" height="9" viewBox="0 0 9 9"><path d="M1 4.600L3.400 7.600 8 .8" fill="none" stroke="#111" stroke-width="1.700"/></svg>
<div class="t blue" style="left:1345px;top:604px">List of relationships (3)</div>
<div class="gb" style="left:1325px;top:620px;width:582px;height:135px"></div>
<div class="btn" style="left:1327px;top:658px;width:12px;height:24px"></div>
<svg class="a" style="left:1329.8px;top:668px" width="6.400" height="4"><path d="M0 4h6.400L3.200 0z" fill="#111"/></svg>
<div class="btn" style="left:1327px;top:692px;width:12px;height:24px"></div>
<svg class="a" style="left:1329.8px;top:702px" width="6.400" height="4"><path d="M0 0h6.400L3.200 4z" fill="#111"/></svg>
<div class="a" style="left:1340px;top:626px;width:560px;height:122px;background:#fff;border:1px solid #b6b2ae"></div>
<div class="a" style="left:1341px;top:627px;width:544px;height:19px;background:#e6e3df"></div>
<div class="a" style="left:1341px;top:627px;width:540px;height:18px;background:linear-gradient(#f9f8f6,#efece9)"></div>
<div class="a" style="left:1341px;top:645px;width:540px;height:1px;background:#b9b5b1"></div>
<div class="a" style="left:1369px;top:627px;width:1px;height:18px;background:#c9c6c2"></div>
<div class="a" style="left:1439px;top:627px;width:1px;height:18px;background:#c9c6c2"></div>
<div class="a" style="left:1372px;top:627px;width:65px;height:18px;overflow:hidden"><div class="t" style="left:-50px;width:165px;text-align:center;top:3px">Name</div></div>
<div class="a" style="left:1509px;top:627px;width:1px;height:18px;background:#c9c6c2"></div>
<div class="a" style="left:1442px;top:627px;width:65px;height:18px;overflow:hidden"><div class="t" style="left:-50px;width:165px;text-align:center;top:3px">Target</div></div>
<div class="a" style="left:1542px;top:627px;width:1px;height:18px;background:#c9c6c2"></div>
<div class="a" style="left:1512px;top:627px;width:28px;height:18px;overflow:hidden"><div class="t" style="left:-50px;width:128px;text-align:center;top:3px">n-1</div></div>
<div class="a" style="left:1575px;top:627px;width:1px;height:18px;background:#c9c6c2"></div>
<div class="a" style="left:1545px;top:627px;width:28px;height:18px;overflow:hidden"><div class="t" style="left:-50px;width:128px;text-align:center;top:3px">1-n</div></div>
<div class="a" style="left:1608px;top:627px;width:1px;height:18px;background:#c9c6c2"></div>
<div class="a" style="left:1578px;top:627px;width:28px;height:18px;overflow:hidden"><div class="t" style="left:-50px;width:128px;text-align:center;top:3px">n-n</div></div>
<div class="a" style="left:1641px;top:627px;width:1px;height:18px;background:#c9c6c2"></div>
<div class="a" style="left:1611px;top:627px;width:28px;height:18px;overflow:hidden"><div class="t" style="left:-50px;width:128px;text-align:center;top:3px">1-1</div></div>
<div class="a" style="left:1711px;top:627px;width:1px;height:18px;background:#c9c6c2"></div>
<div class="a" style="left:1644px;top:627px;width:65px;height:18px;overflow:hidden"><div class="t" style="left:-50px;width:165px;text-align:center;top:3px">Decoration</div></div>
<div class="a" style="left:1781px;top:627px;width:1px;height:18px;background:#c9c6c2"></div>
<div class="a" style="left:1714px;top:627px;width:65px;height:18px;overflow:hidden"><div class="t" style="left:-50px;width:165px;text-align:center;top:3px">Collection</div></div>
<div class="a" style="left:1851px;top:627px;width:1px;height:18px;background:#c9c6c2"></div>
<div class="a" style="left:1784px;top:627px;width:65px;height:18px;overflow:hidden"><div class="t" style="left:-50px;width:165px;text-align:center;top:3px">Foreign key</div></div>
<div class="a" style="left:1880px;top:627px;width:1px;height:18px;background:#c9c6c2"></div>
<div class="a" style="left:1341px;top:679px;width:540px;height:1px;background:#cfccc8"></div>
<div class="a" style="left:1341px;top:680px;width:540px;height:33px;background:#f7f6f5"></div>
<div class="a" style="left:1369px;top:680px;width:70px;height:33px;background:#fff"></div>
<div class="a" style="left:1781px;top:680px;width:70px;height:33px;background:#fff"></div>
<div class="a" style="left:1341px;top:713px;width:540px;height:1px;background:#cfccc8"></div>
<div class="a" style="left:1369px;top:646px;width:1px;height:101px;background:#cfccc8"></div>
<div class="a" style="left:1439px;top:646px;width:1px;height:101px;background:#cfccc8"></div>
<div class="a" style="left:1509px;top:646px;width:1px;height:101px;background:#cfccc8"></div>
<div class="a" style="left:1542px;top:646px;width:1px;height:101px;background:#cfccc8"></div>
<div class="a" style="left:1575px;top:646px;width:1px;height:101px;background:#cfccc8"></div>
<div class="a" style="left:1608px;top:646px;width:1px;height:101px;background:#cfccc8"></div>
<div class="a" style="left:1641px;top:646px;width:1px;height:101px;background:#cfccc8"></div>
<div class="a" style="left:1711px;top:646px;width:1px;height:101px;background:#cfccc8"></div>
<div class="a" style="left:1781px;top:646px;width:1px;height:101px;background:#cfccc8"></div>
<div class="a" style="left:1851px;top:646px;width:1px;height:101px;background:#cfccc8"></div>
<svg class="a" style="left:1344px;top:654px" width="16" height="16" ><use href="#i-rel"/></svg>
<div class="t" style="left:1373px;top:656px">author</div>
<div class="btn" style="left:1440px;top:646px;width:69px;height:33px;border-color:#b5b1ad;background:linear-gradient(#fbfaf9,#f0edea 60%,#e9e6e2)"></div>
<div class="t" style="left:1445px;top:656px;width:42px;overflow:hidden;color:#bdbbb8">author</div>
<svg class="a" style="left:1494.75px;top:660.6999999999999px" width="7.5" height="4.2"><path d="M0 0h7.5L3.75 4.2z" fill="#d0cecb"/></svg>
<div class="cb" style="left:1519px;top:655px;background:#efebe7;border-color:#c2bdb8"></div><svg class="a" style="left:1522px;top:658px" width="9" height="9" viewBox="0 0 9 9"><path d="M1 4.600L3.400 7.600 8 .8" fill="none" stroke="#8f8c88" stroke-width="1.700"/></svg>
<div class="cb" style="left:1552px;top:655px;background:#efebe7;border-color:#c2bdb8"></div>
<div class="cb" style="left:1585px;top:655px;background:#efebe7;border-color:#c2bdb8"></div>
<div class="cb" style="left:1618px;top:655px;background:#efebe7;border-color:#c2bdb8"></div>
<div class="btn" style="left:1642px;top:646px;width:69px;height:33px;border-color:#b5b1ad;background:linear-gradient(#fbfaf9,#f0edea 60%,#e9e6e2)"></div>
<div class="t" style="left:1647px;top:656px;color:#000">boost::</div>
<svg class="a" style="left:1696.75px;top:660.6999999999999px" width="7.5" height="4.2"><path d="M0 0h7.5L3.75 4.2z" fill="#4a4a4a"/></svg>
<div class="btn" style="left:1712px;top:646px;width:69px;height:33px;border-color:#b5b1ad;background:linear-gradient(#fbfaf9,#f0edea 60%,#e9e6e2)"></div>
<div class="t" style="left:1717px;top:656px;width:42px;overflow:hidden;color:#bdbbb8">qx::QxCollection</div>
<svg class="a" style="left:1766.75px;top:660.6999999999999px" width="7.5" height="4.2"><path d="M0 0h7.5L3.75 4.2z" fill="#d0cecb"/></svg>
<div class="btn" style="left:1852px;top:646px;width:28px;height:33px"></div>
<svg class="a" style="left:1858.5px;top:654.0px" width="15" height="15" ><use href="#i-del"/></svg>
<svg class="a" style="left:1344px;top:688px" width="16" height="16" ><use href="#i-rel"/></svg>
<div class="a" style="left:1370px;top:680px;width:69px;height:33px;overflow:hidden"><div class="t" style="right:3px;top:10px">list_of_comment</div></div>
<div class="btn" style="left:1440px;top:680px;width:69px;height:33px;border-color:#b5b1ad;background:linear-gradient(#fbfaf9,#f0edea 60%,#e9e6e2)"></div>
<div class="t" style="left:1445px;top:690px;width:42px;overflow:hidden;color:#bdbbb8">comment</div>
<svg class="a" style="left:1494.75px;top:694.6999999999999px" width="7.5" height="4.2"><path d="M0 0h7.5L3.75 4.2z" fill="#d0cecb"/></svg>
<div class="cb" style="left:1519px;top:689px;background:#efebe7;border-color:#c2bdb8"></div>
<div class="cb" style="left:1552px;top:689px;background:#efebe7;border-color:#c2bdb8"></div><svg class="a" style="left:1555px;top:692px" width="9" height="9" viewBox="0 0 9 9"><path d="M1 4.600L3.400 7.600 8 .8" fill="none" stroke="#8f8c88" stroke-width="1.700"/></svg>
<div class="cb" style="left:1585px;top:689px;background:#efebe7;border-color:#c2bdb8"></div>
<div class="cb" style="left:1618px;top:689px;background:#efebe7;border-color:#c2bdb8"></div>
<div class="btn" style="left:1642px;top:680px;width:69px;height:33px;border-color:#b5b1ad;background:linear-gradient(#fbfaf9,#f0edea 60%,#e9e6e2)"></div>
<div class="t" style="left:1647px;top:690px;color:#000">boost::</div>
<svg class="a" style="left:1696.75px;top:694.6999999999999px" width="7.5" height="4.2"><path d="M0 0h7.5L3.75 4.2z" fill="#4a4a4a"/></svg>
<div class="btn" style="left:1712px;top:680px;width:69px;height:33px;border-color:#b5b1ad;background:linear-gradient(#fbfaf9,#f0edea 60%,#e9e6e2)"></div>
<div class="t" style="left:1717px;top:690px;width:42px;overflow:hidden;color:#000">qx::QxCollection</div>
<svg class="a" style="left:1766.75px;top:694.6999999999999px" width="7.5" height="4.2"><path d="M0 0h7.5L3.75 4.2z" fill="#4a4a4a"/></svg>
<div class="t" style="left:1785px;top:690px">blog_id</div>
<div class="btn" style="left:1852px;top:680px;width:28px;height:33px"></div>
<svg class="a" style="left:1858.5px;top:688.0px" width="15" height="15" ><use href="#i-del"/></svg>
<svg class="a" style="left:1344px;top:722px" width="16" height="16" ><use href="#i-rel"/></svg>
<div class="a" style="left:1370px;top:714px;width:69px;height:33px;overflow:hidden"><div class="t" style="right:3px;top:10px">list_of_category</div></div>
<div class="btn" style="left:1440px;top:714px;width:69px;height:33px;border-color:#b5b1ad;background:linear-gradient(#fbfaf9,#f0edea 60%,#e9e6e2)"></div>
<div class="t" style="left:1445px;top:724px;width:42px;overflow:hidden;color:#bdbbb8">category</div>
<svg class="a" style="left:1494.75px;top:728.6999999999999px" width="7.5" height="4.2"><path d="M0 0h7.5L3.75 4.2z" fill="#d0cecb"/></svg>
<div class="cb" style="left:1519px;top:723px;background:#efebe7;border-color:#c2bdb8"></div>
<div class="cb" style="left:1552px;top:723px;background:#efebe7;border-color:#c2bdb8"></div>
<div class="cb" style="left:1585px;top:723px;background:#efebe7;border-color:#c2bdb8"></div><svg class="a" style="left:1588px;top:726px" width="9" height="9" viewBox="0 0 9 9"><path d="M1 4.600L3.400 7.600 8 .8" fill="none" stroke="#8f8c88" stroke-width="1.700"/></svg>
<div class="cb" style="left:1618px;top:723px;background:#efebe7;border-color:#c2bdb8"></div>
<div class="btn" style="left:1642px;top:714px;width:69px;height:33px;border-color:#b5b1ad;background:linear-gradient(#fbfaf9,#f0edea 60%,#e9e6e2)"></div>
<div class="t" style="left:1647px;top:724px;color:#000">boost::</div>
<svg class="a" style="left:1696.75px;top:728.6999999999999px" width="7.5" height="4.2"><path d="M0 0h7.5L3.75 4.2z" fill="#4a4a4a"/></svg>
<div class="btn" style="left:1712px;top:714px;width:69px;height:33px;border-color:#b5b1ad;background:linear-gradient(#fbfaf9,#f0edea 60%,#e9e6e2)"></div>
<div class="t" style="left:1717px;top:724px;width:42px;overflow:hidden;color:#000">qx::QxCollection</div>
<svg class="a" style="left:1766.75px;top:728.6999999999999px" width="7.5" height="4.2"><path d="M0 0h7.5L3.75 4.2z" fill="#4a4a4a"/></svg>
<div class="t" style="left:1785px;top:724px">blog_id</div>
<div class="btn" style="left:1852px;top:714px;width:28px;height:33px"></div>
<svg class="a" style="left:1858.5px;top:722.0px" width="15" height="15" ><use href="#i-del"/></svg>
<div class="a" style="left:1885px;top:627px;width:14px;height:120px;background:linear-gradient(90deg,#eceae7,#f8f7f6 55%,#f2f1ef);border-left:1px solid #bdb9b5"></div>
<div class="a" style="left:1885px;top:627px;width:14px;height:14px;background:linear-gradient(#faf9f8,#ebe8e5);border:1px solid #c3c0bc;border-top:none;border-right:none"></div>
<div class="a" style="left:1885px;top:733px;width:14px;height:14px;background:linear-gradient(#faf9f8,#ebe8e5);border:1px solid #c3c0bc;border-bottom:none;border-right:none"></div>
<div class="a" style="left:1885px;top:687px;width:14px;height:47px;background:linear-gradient(90deg,#dedbd7,#e4e1de);border:1px solid #c3c0bc;border-right:none"></div>
<svg class="a" style="left:1888.5px;top:632px" width="8" height="4.500"><path d="M0 4.500h8L4 0z" fill="#4a4a4a"/></svg>
<svg class="a" style="left:1888.5px;top:737.5px" width="8" height="4.500"><path d="M0 0h8L4 4.500z" fill="#4a4a4a"/></svg>
<div class="cb" style="left:1325px;top:762px;background:#fff;border-color:#bcb6b2"></div><svg class="a" style="left:1328px;top:765px" width="9" height="9" viewBox="0 0 9 9"><path d="M1 4.600L3.400 7.600 8 .8" fill="none" stroke="#111" stroke-width="1.700"/></svg>
<div class="t blue" style="left:1345px;top:764px">List of metadata (0)</div>
<div class="gb" style="left:1325px;top:780px;width:582px;height:133px"></div>
<div class="a" style="left:1331px;top:786px;width:569px;height:121px;background:#fff;border:1px solid #b6b2ae"></div>
<div class="a" style="left:1332px;top:787px;width:564px;height:17px;background:linear-gradient(#f9f8f6,#efece9)"></div>
<div class="a" style="left:1332px;top:804px;width:564px;height:1px;background:#b9b5b1"></div>
<div class="a" style="left:1354px;top:787px;width:1px;height:17px;background:#c9c6c2"></div>
<div class="a" style="left:1610px;top:787px;width:1px;height:17px;background:#c9c6c2"></div>
<div class="a" style="left:1357px;top:787px;width:251px;height:17px;overflow:hidden"><div class="t" style="left:-50px;width:351px;text-align:center;top:3px">Key</div></div>
<div class="a" style="left:1866px;top:787px;width:1px;height:17px;background:#c9c6c2"></div>
<div class="a" style="left:1613px;top:787px;width:251px;height:17px;overflow:hidden"><div class="t" style="left:-50px;width:351px;text-align:center;top:3px">Value</div></div>
<div class="a" style="left:1895px;top:787px;width:1px;height:17px;background:#c9c6c2"></div>
<div class="a" style="left:1332px;top:830px;width:564px;height:1px;background:#cfccc8"></div>
<div class="a" style="left:1354px;top:805px;width:1px;height:25px;background:#cfccc8"></div>
<div class="a" style="left:1610px;top:805px;width:1px;height:25px;background:#cfccc8"></div>
<div class="a" style="left:1866px;top:805px;width:1px;height:25px;background:#cfccc8"></div>
<div class="btn" style="left:1867px;top:806px;width:28px;height:25px"></div>
<svg class="a" style="left:1873.5px;top:810.0px" width="15" height="15" ><use href="#i-del"/></svg>
<div class="btn" style="left:1324px;top:921px;width:28px;height:24px"></div>
<svg class="a" style="left:1330px;top:925px" width="16" height="16" viewBox="0 0 16 16"><path d="M8 1l7 5.600-6.400 8.400L1.200 9z" fill="#2a62b6" stroke="#1a478e" stroke-width=".8"/><path d="M1.200 9l7.400 6v-1.600L2.400 8.400z" fill="#dfe7f2"/><path d="M6.800 6.200c.2-1.200 2.400-1.400 2.600-.2.100.9-1.200 1-1.200 2" fill="none" stroke="#fff" stroke-width="1"/><circle cx="8.100" cy="9.300" r=".6" fill="#fff"/></svg>
<div class="btn" style="left:1358px;top:921px;width:80px;height:24px"></div>
<svg class="a" style="left:1370px;top:925.500px" width="16" height="15" viewBox="0 0 16 15"><path d="M8 1.500C3.500 1.500 .8 4.500 .8 8c0 3.400 2.800 6 6 6 1.600 0 1.800-1.200 1.400-2-.6-1.200.4-2.200 1.600-2.200h2.400c1.800 0 3-1.200 3-2.800 0-3.200-3-5.500-7.200-5.500z" fill="#f1c889" stroke="#b88a4a" stroke-width=".8"/><circle cx="4" cy="6" r="1.300" fill="#e23a3a"/><circle cx="7.400" cy="4.200" r="1.300" fill="#3a7ae2"/><circle cx="11" cy="5.400" r="1.300" fill="#3ab83a"/><circle cx="4.200" cy="9.800" r="1.300" fill="#e2d23a"/><path d="M9 3l5.400-3 .8 .8-4.200 4.600z" fill="#8a5a2a"/></svg>
<div class="t" style="left:1387px;top:927px">Colors</div>
<div class="btn" style="left:1530px;top:921px;width:80px;height:24px;border-color:#3a80bd;background:linear-gradient(#f7f9fa,#e0e5e8)"></div>
<svg class="a" style="left:1546px;top:925px" width="15" height="15" ><use href="#i-check"/></svg>
<div class="t" style="left:1563px;top:927px">Save</div>
<div class="btn" style="left:1616px;top:921px;width:205px;height:24px;border-color:#3a80bd;background:linear-gradient(#f7f9fa,#e0e5e8)"></div>
<svg class="a" style="left:1621px;top:925px" width="15" height="15" ><use href="#i-check"/></svg>
<div class="t" style="left:1638px;top:927px">Save and create a new entity</div>
<div class="btn" style="left:1827px;top:921px;width:80px;height:24px"></div>
<svg class="a" style="left:1839.5px;top:926.5px" width="12" height="12" ><use href="#i-cross"/></svg>
<div class="t" style="left:1855px;top:927px">Cancel</div>
<div class="t" style="left:67px;top:965px">Project loaded : qxBlog</div>
<div class="t" style="left:1672px;top:966px">100%</div>
<svg class="a" style="left:1717px;top:966px" width="12" height="12" viewBox="0 0 11 11"><circle cx="5.700" cy="5.900" r="4.800" fill="#b9b9b9" opacity=".5"/><circle cx="5.500" cy="5.500" r="4.600" fill="#f6f8fc" stroke="#96a4c2" stroke-width=".9"/><path d="M3 5.500h5" stroke="#2a62c8" stroke-width="1.200"/></svg>
<svg class="a" style="left:1899px;top:966px" width="12" height="12" viewBox="0 0 11 11"><circle cx="5.700" cy="5.900" r="4.800" fill="#b9b9b9" opacity=".5"/><circle cx="5.500" cy="5.500" r="4.600" fill="#f6f8fc" stroke="#96a4c2" stroke-width=".9"/><path d="M5.500 3v5M3 5.500h5" stroke="#2a62c8" stroke-width="1.200"/></svg>
<div class="a" style="left:1738px;top:969px;width:152px;height:5px;border-radius:2.500px;background:#d9d6d2;border:1px solid #bcb8b4"></div>
<div class="a" style="left:1738px;top:969px;width:75px;height:5px;border-radius:2.500px;background:linear-gradient(#4ea3e8,#3585d4);border:1px solid #2f74b8"></div>
<div class="a" style="left:1807px;top:966px;width:12px;height:12px;border-radius:2.500px;background:linear-gradient(#fff,#ebe8e5);border:1px solid #aaa6a2"></div>
<div class="a splitter" style="left:277px;top:511px;width:1px;height:1px;background:#a9a6a2"></div><div class="a" style="left:1307px;top:510px;width:1px;height:1px;background:#a9a6a2"></div><div class="a splitter" style="left:277px;top:514px;width:1px;height:1px;background:#a9a6a2"></div><div class="a" style="left:1307px;top:513px;width:1px;height:1px;background:#a9a6a2"></div><div class="a splitter" style="left:277px;top:517px;width:1px;height:1px;background:#a9a6a2"></div><div class="a" style="left:1307px;top:516px;width:1px;height:1px;background:#a9a6a2"></div><div class="a splitter" style="left:277px;top:520px;width:1px;height:1px;background:#a9a6a2"></div><div class="a" style="left:1307px;top:519px;width:1px;height:1px;background:#a9a6a2"></div><div class="a splitter" style="left:277px;top:523px;width:1px;height:1px;background:#a9a6a2"></div><div class="a" style="left:1307px;top:522px;width:1px;height:1px;background:#a9a6a2"></div><div class="a splitter" style="left:277px;top:526px;width:1px;height:1px;background:#a9a6a2"></div><div class="a" style="left:1307px;top:525px;width:1px;height:1px;background:#a9a6a2"></div>
</div></body></html>
